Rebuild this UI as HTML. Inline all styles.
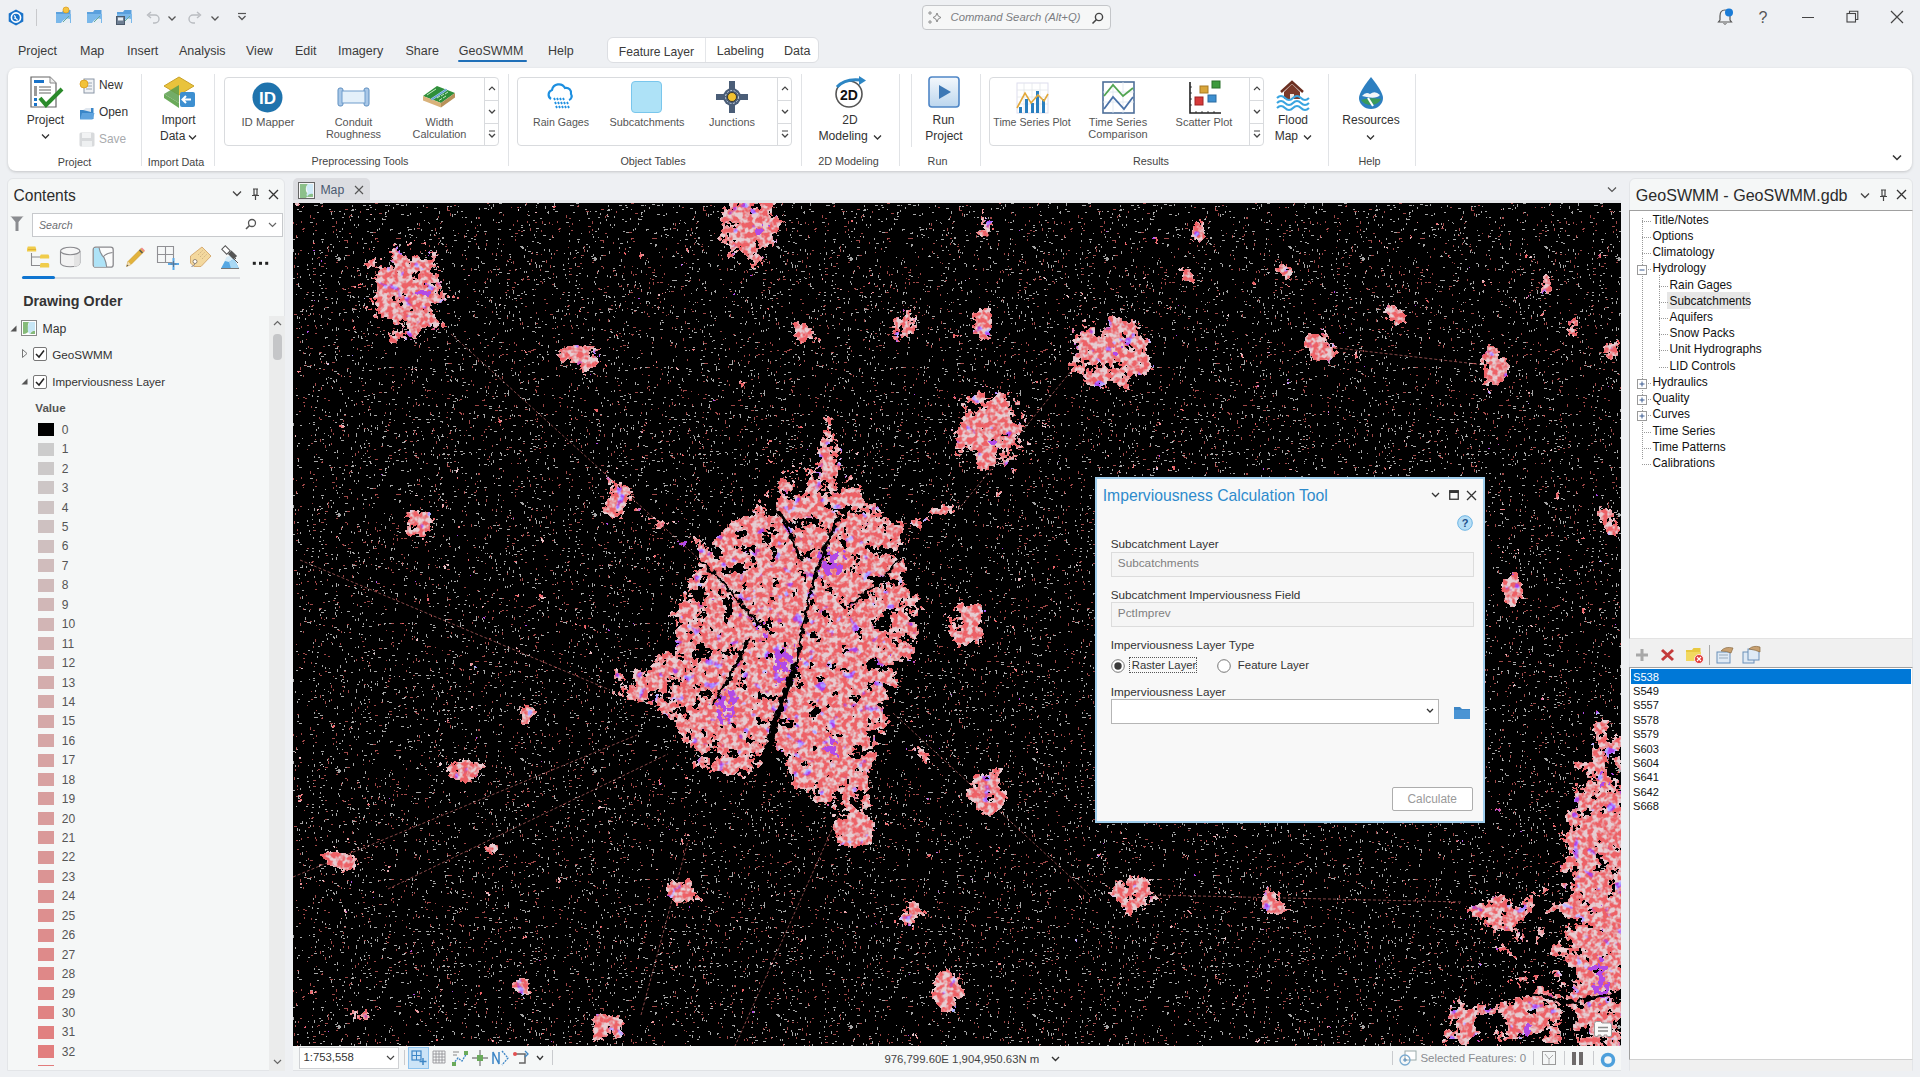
<!DOCTYPE html>
<html><head><meta charset="utf-8">
<style>
html,body{margin:0;padding:0;width:1920px;height:1077px;overflow:hidden;background:#eef0f3;font-family:"Liberation Sans", sans-serif;}
.t{position:absolute;white-space:nowrap;}
.r{position:absolute;box-sizing:border-box;}
svg.r{overflow:visible;}
</style></head><body>
<svg class="r" style="left:8px;top:9px;" width="16" height="17" viewBox="0 0 16 17"><path d="M8 0.5 L15.3 4.5 L15.3 12.5 L8 16.5 L0.7 12.5 L0.7 4.5 Z" fill="#1a73c9"/><circle cx="8" cy="8.5" r="4.6" fill="none" stroke="#fff" stroke-width="1.6"/><path d="M6 6.5 q2 1 1 3 q2 0 2.5 2" stroke="#fff" stroke-width="1.2" fill="none"/></svg><div class="r" style="left:36px;top:9px;width:1px;height:17px;background:#c8c9cc"></div><svg class="r" style="left:55px;top:8px;" width="17" height="16" viewBox="0 0 17 16"><path d="M1 4 h6 l1.5-2 h7 v12 h-14.5z" fill="#5aa0dd"/><path d="M1 6 h15 v9 h-15z" fill="#7ab8ea"/><path d="M6 15 q4-6 9-4 v4z" fill="#e6eef5"/><path d="M8 14 l6-6" stroke="#6a9" stroke-width="1"/></svg><svg class="r" style="left:86px;top:8px;" width="17" height="16" viewBox="0 0 17 16"><path d="M1 4 h6 l1.5-2 h7 v12 h-14.5z" fill="#5aa0dd"/><path d="M1 6 h15 v9 h-15z" fill="#7ab8ea"/><path d="M6 15 q4-6 9-4 v4z" fill="#e6eef5"/><path d="M8 14 l6-6" stroke="#6a9" stroke-width="1"/></svg><svg class="r" style="left:116px;top:8px;" width="17" height="16" viewBox="0 0 17 16"><path d="M1 4 h6 l1.5-2 h7 v12 h-14.5z" fill="#5aa0dd"/><path d="M1 6 h15 v9 h-15z" fill="#7ab8ea"/><path d="M6 15 q4-6 9-4 v4z" fill="#e6eef5"/><path d="M8 14 l6-6" stroke="#6a9" stroke-width="1"/></svg><svg class="r" style="left:62px;top:6px;" width="8" height="8" viewBox="0 0 8 8"><circle cx="4" cy="4" r="3" fill="#f5c542" stroke="#e0a020" stroke-width="0.8"/></svg><svg class="r" style="left:116px;top:16px;" width="9" height="9" viewBox="0 0 9 9"><rect x="0.5" y="0.5" width="8" height="8" fill="#6d7e92" stroke="#4b5a6b"/><rect x="2" y="1.5" width="5" height="3" fill="#e8eef4"/></svg><svg class="r" style="left:145px;top:11px;" width="15" height="14" viewBox="0 0 15 14"><path d="M4 4 h6 a4 4 0 0 1 0 8 h-2" fill="none" stroke="#b9bcc1" stroke-width="1.4"/><path d="M6 1 L2.5 4 L6 7" fill="none" stroke="#b9bcc1" stroke-width="1.4"/></svg><svg class="r" style="left:167px;top:15px;" width="10" height="7" viewBox="0 0 10 7"><path d="M1.5 1.5 L5 5 L8.5 1.5" fill="none" stroke="#555" stroke-width="1.3"/></svg><svg class="r" style="left:188px;top:11px;" width="15" height="14" viewBox="0 0 15 14"><path d="M11 4 h-6 a4 4 0 0 0 0 8 h2" fill="none" stroke="#b9bcc1" stroke-width="1.4"/><path d="M9 1 L12.5 4 L9 7" fill="none" stroke="#b9bcc1" stroke-width="1.4"/></svg><svg class="r" style="left:210px;top:15px;" width="10" height="7" viewBox="0 0 10 7"><path d="M1.5 1.5 L5 5 L8.5 1.5" fill="none" stroke="#555" stroke-width="1.3"/></svg><svg class="r" style="left:237px;top:12px;" width="10" height="11" viewBox="0 0 10 11"><path d="M1 1.5 h8" stroke="#555" stroke-width="1.2"/><path d="M1.5 4 L5 7.5 L8.5 4" fill="none" stroke="#555" stroke-width="1.3"/></svg><div class="r" style="left:922px;top:5px;width:189px;height:25px;background:#f6f7f7;border:1px solid #c4c6c9;border-radius:4px"></div><svg class="r" style="left:927px;top:10px;" width="16" height="15" viewBox="0 0 16 15"><path d="M10 3 q0.6 4 4 4.5 q-3.4 0.5 -4 4.5 q-0.6-4 -4-4.5 q3.4-0.5 4-4.5z" fill="none" stroke="#888" stroke-width="1"/><path d="M3 1 v4 M1 3 h4 M3 10 v4 M1 12 h4" stroke="#888" stroke-width="0.9"/></svg><div class="t" style="left:950.5px;top:12.36px;font-size:11.27px;line-height:11.27px;color:#7b7d82;font-style:italic;">Command Search (Alt+Q)</div><svg class="r" style="left:1091px;top:12px;" width="13" height="13" viewBox="0 0 13 13"><circle cx="8" cy="5" r="3.6" fill="none" stroke="#444" stroke-width="1.4"/><path d="M5.5 7.5 L1.5 11.5" stroke="#444" stroke-width="1.6"/></svg><svg class="r" style="left:1717px;top:8px;" width="16" height="18" viewBox="0 0 16 18"><path d="M8 2 q-5 0 -5 6 v4 l-1.5 2 h13 l-1.5-2 v-4 q0-6 -5-6z" fill="none" stroke="#555" stroke-width="1.2"/><path d="M6.5 15.5 q1.5 1.5 3 0" stroke="#555" fill="none"/><circle cx="12" cy="4.5" r="4" fill="#1a7bd6"/></svg><div class="t" style="left:1758.5px;top:10.46px;font-size:16px;line-height:16px;color:#555;">?</div><div class="r" style="left:1802px;top:17px;width:12px;height:1px;background:#444"></div><svg class="r" style="left:1846px;top:10px;" width="13" height="13" viewBox="0 0 13 13"><rect x="1" y="3.5" width="8.5" height="8.5" fill="none" stroke="#444" stroke-width="1.1"/><path d="M3.5 3.5 v-2.3 h8.3 v8.3 h-2.3" fill="none" stroke="#444" stroke-width="1.1"/></svg><svg class="r" style="left:1890px;top:10px;" width="14" height="14" viewBox="0 0 14 14"><path d="M1 1 L13 13 M13 1 L1 13" stroke="#444" stroke-width="1.2"/></svg><div class="t" style="left:18.0px;top:45.42px;font-size:12.5px;line-height:12.5px;color:#3b3b3b;">Project</div><div class="t" style="left:80.0px;top:45.42px;font-size:12.5px;line-height:12.5px;color:#3b3b3b;">Map</div><div class="t" style="left:127.0px;top:45.42px;font-size:12.5px;line-height:12.5px;color:#3b3b3b;">Insert</div><div class="t" style="left:179.0px;top:45.42px;font-size:12.5px;line-height:12.5px;color:#3b3b3b;">Analysis</div><div class="t" style="left:246.0px;top:45.42px;font-size:12.5px;line-height:12.5px;color:#3b3b3b;">View</div><div class="t" style="left:295.0px;top:45.42px;font-size:12.5px;line-height:12.5px;color:#3b3b3b;">Edit</div><div class="t" style="left:338.0px;top:45.42px;font-size:12.5px;line-height:12.5px;color:#3b3b3b;">Imagery</div><div class="t" style="left:405.5px;top:45.42px;font-size:12.5px;line-height:12.5px;color:#3b3b3b;">Share</div><div class="t" style="left:458.8px;top:45.42px;font-size:12.5px;line-height:12.5px;color:#3b3b3b;">GeoSWMM</div><div class="t" style="left:548.0px;top:45.42px;font-size:12.5px;line-height:12.5px;color:#3b3b3b;">Help</div><div class="r" style="left:458px;top:60px;width:69px;height:2px;background:#1f6fb8;border-radius:1px"></div><div class="r" style="left:607px;top:37px;width:212px;height:26px;background:#fff;border:1px solid #dcdee2;border-radius:6px"></div><div class="r" style="left:705px;top:38px;width:1px;height:24px;background:#e4e6e9"></div><div class="t" style="left:618.8px;top:45.76px;font-size:12.1px;line-height:12.1px;color:#3b3b3b;">Feature Layer</div><div class="t" style="left:716.7px;top:45.42px;font-size:12.5px;line-height:12.5px;color:#3b3b3b;">Labeling</div><div class="t" style="left:784.0px;top:45.42px;font-size:12.5px;line-height:12.5px;color:#3b3b3b;">Data</div><div class="r" style="left:8px;top:68px;width:1904px;height:103px;background:#fff;border-radius:8px;box-shadow:0 1px 3px rgba(0,0,0,0.18)"></div><div class="r" style="left:141px;top:74px;width:1px;height:92px;background:#e1e3e6"></div><div class="r" style="left:214px;top:74px;width:1px;height:92px;background:#e1e3e6"></div><div class="r" style="left:508px;top:74px;width:1px;height:92px;background:#e1e3e6"></div><div class="r" style="left:801px;top:74px;width:1px;height:92px;background:#e1e3e6"></div><div class="r" style="left:899px;top:74px;width:1px;height:92px;background:#e1e3e6"></div><div class="r" style="left:979.5px;top:74px;width:1px;height:92px;background:#e1e3e6"></div><div class="r" style="left:1328px;top:74px;width:1px;height:92px;background:#e1e3e6"></div><div class="r" style="left:1414.5px;top:74px;width:1px;height:92px;background:#e1e3e6"></div><div class="r" style="left:911px;top:74px;width:1px;height:73px;background:#e1e3e6"></div><svg class="r" style="left:30px;top:76px;" width="33" height="32" viewBox="0 0 33 32"><path d="M1 1 h19 l6 6 v24 h-25z" fill="#fff" stroke="#666" stroke-width="1.2"/><path d="M20 1 v6 h6" fill="#eee" stroke="#888"/><rect x="4" y="4" width="10" height="3" fill="#1a73c9"/><rect x="4" y="10" width="3" height="10" fill="#999"/><path d="M9 11 h12 M9 14 h12 M9 17 h12" stroke="#999" stroke-width="1.5"/><rect x="4" y="22" width="3" height="3" fill="#1a73c9"/><rect x="4" y="27" width="3" height="3" fill="#1a73c9"/><path d="M10 22 L16 29 L32 13" fill="none" stroke="#2a8a2a" stroke-width="4"/></svg><div class="t" style="left:-104.5px;width:300px;text-align:center;top:114.34px;font-size:12px;line-height:12px;color:#333;">Project</div><svg class="r" style="left:41px;top:133px;" width="9" height="7" viewBox="0 0 9 7"><path d="M1 1.5 L4.5 5 L8 1.5" fill="none" stroke="#333" stroke-width="1.3"/></svg><svg class="r" style="left:79px;top:78px;" width="16" height="16" viewBox="0 0 16 16"><rect x="5" y="1" width="10" height="14" fill="#f0f2f5" stroke="#8a96a6" stroke-width="1"/><path d="M7 5h6M7 8h6M7 11h6" stroke="#9aa6b4"/><circle cx="5" cy="6" r="4" fill="#f2c23a" stroke="#d99a1a" stroke-width="0.8"/></svg><div class="t" style="left:99.0px;top:79.63px;font-size:11.9px;line-height:11.9px;color:#333;">New</div><svg class="r" style="left:79px;top:107px;" width="16" height="13" viewBox="0 0 16 13"><path d="M1 3 h5 l1.5-2 h7 v11 h-13.5z" fill="#3a86c8"/><path d="M3 6 h12.5 l-2 6.5 h-12.5z" fill="#5fa3de"/><path d="M4 3 l3-2 h5 v4" fill="#dfe6ee"/></svg><div class="t" style="left:99.0px;top:106.63px;font-size:11.9px;line-height:11.9px;color:#333;">Open</div><svg class="r" style="left:79px;top:132px;" width="16" height="15" viewBox="0 0 16 15"><rect x="0.5" y="0.5" width="15" height="14" rx="1.5" fill="#d8dadc"/><rect x="3" y="1" width="9" height="5" fill="#f2f3f4"/><rect x="3" y="9" width="10" height="6" fill="#eef0f1"/></svg><div class="t" style="left:99.0px;top:133.53px;font-size:11.9px;line-height:11.9px;color:#a9abae;">Save</div><div class="t" style="left:-75.5px;width:300px;text-align:center;top:156.66px;font-size:10.8px;line-height:10.8px;color:#444;">Project</div><svg class="r" style="left:162px;top:76px;" width="34" height="33" viewBox="0 0 34 33"><path d="M17 1 L32 10 L17 19 L2 10z" fill="#e9c33c" stroke="#c9a22a" stroke-width="1"/><path d="M2 18 L17 27 L17 32 L2 22z" fill="#6aaa5a"/><path d="M2 18 L17 9 L17 27z" fill="#5a9d4c" opacity="0.85"/><rect x="18" y="16" width="15" height="15" rx="2" fill="#3d8fd0"/><path d="M29 23.5 h-8 M24 20 l-3.5 3.5 l3.5 3.5" stroke="#fff" stroke-width="2" fill="none"/></svg><div class="t" style="left:28.5px;width:300px;text-align:center;top:114.34px;font-size:12px;line-height:12px;color:#333;">Import</div><div class="t" style="left:160.0px;top:129.84px;font-size:12px;line-height:12px;color:#333;">Data</div><svg class="r" style="left:188px;top:134px;" width="9" height="7" viewBox="0 0 9 7"><path d="M1 1.5 L4.5 5 L8 1.5" fill="none" stroke="#333" stroke-width="1.3"/></svg><div class="t" style="left:26.0px;width:300px;text-align:center;top:156.66px;font-size:10.8px;line-height:10.8px;color:#444;">Import Data</div><div class="r" style="left:224px;top:77px;width:275px;height:69px;background:#fff;border:1px solid #d9dbde;border-radius:4px"></div><div class="r" style="left:484px;top:77px;width:15px;height:69px;border-left:1px solid #d9dbde"></div><div class="r" style="left:484px;top:100px;width:15px;height:1px;background:#d9dbde"></div><div class="r" style="left:484px;top:123px;width:15px;height:1px;background:#d9dbde"></div><svg class="r" style="left:488px;top:86px;" width="8" height="5" viewBox="0 0 8 5"><path d="M1 4 L4 1 L7 4" fill="none" stroke="#444" stroke-width="1.1"/></svg><svg class="r" style="left:488px;top:109px;" width="8" height="5" viewBox="0 0 8 5"><path d="M1 1 L4 4 L7 1" fill="none" stroke="#444" stroke-width="1.3"/></svg><svg class="r" style="left:488px;top:130px;" width="8" height="9" viewBox="0 0 8 9"><path d="M1 1 h6" stroke="#444" stroke-width="1"/><path d="M1 4 L4 7 L7 4" fill="none" stroke="#444" stroke-width="1.3"/></svg><svg class="r" style="left:252px;top:82px;" width="31" height="31" viewBox="0 0 31 31"><circle cx="15.5" cy="15.5" r="15" fill="#1f73ad"/><text x="15.5" y="21.5" text-anchor="middle" font-family="Liberation Sans" font-weight="bold" font-size="17" fill="#fff">ID</text></svg><div class="t" style="left:118.0px;width:300px;text-align:center;top:116.57px;font-size:11.38px;line-height:11.38px;color:#555;">ID Mapper</div><svg class="r" style="left:337px;top:87px;" width="33" height="20" viewBox="0 0 33 20"><rect x="1" y="1" width="5" height="18" rx="2" fill="#a9c8e8" stroke="#5f8fc0"/><rect x="27" y="1" width="5" height="18" rx="2" fill="#a9c8e8" stroke="#5f8fc0"/><rect x="5" y="4" width="23" height="12" fill="#e4f0fa" stroke="#6f9ccb"/></svg><div class="t" style="left:203.5px;width:300px;text-align:center;top:116.77px;font-size:10.9px;line-height:10.9px;color:#555;">Conduit</div><div class="t" style="left:203.5px;width:300px;text-align:center;top:129.47px;font-size:10.9px;line-height:10.9px;color:#555;">Roughness</div><svg class="r" style="left:422px;top:85px;" width="34" height="23" viewBox="0 0 34 23"><path d="M1 11 L15 1 L33 8 L19 18z" fill="#2f8f3a"/><path d="M1 11 L19 18 L19 22.5 L1 15.5z" fill="#d9b27a"/><path d="M19 18 L33 8 L33 12.5 L19 22.5z" fill="#b8915a"/><path d="M9.5 14.5 L24.5 4.5" stroke="#9cc8ee" stroke-width="2.2"/><path d="M9.5 14.5 L24.5 4.5" stroke="#3a78b8" stroke-width="0.7"/><path d="M5 10 l3-2 M8 8 l3-2 M11 6 l3-2 M15 13 l3-2 M19 11 l3-2 M23 9 l3-2 M17 15.5 l3-2 M21 13 l3-2" stroke="#d8f0d8" stroke-width="0.9"/></svg><div class="t" style="left:289.5px;width:300px;text-align:center;top:116.77px;font-size:10.9px;line-height:10.9px;color:#555;">Width</div><div class="t" style="left:289.5px;width:300px;text-align:center;top:129.47px;font-size:10.9px;line-height:10.9px;color:#555;">Calculation</div><div class="t" style="left:210.0px;width:300px;text-align:center;top:156.46px;font-size:10.8px;line-height:10.8px;color:#444;">Preprocessing Tools</div><div class="r" style="left:517px;top:77px;width:275px;height:69px;background:#fff;border:1px solid #d9dbde;border-radius:4px"></div><div class="r" style="left:777px;top:77px;width:15px;height:69px;border-left:1px solid #d9dbde"></div><div class="r" style="left:777px;top:100px;width:15px;height:1px;background:#d9dbde"></div><div class="r" style="left:777px;top:123px;width:15px;height:1px;background:#d9dbde"></div><svg class="r" style="left:781px;top:86px;" width="8" height="5" viewBox="0 0 8 5"><path d="M1 4 L4 1 L7 4" fill="none" stroke="#444" stroke-width="1.1"/></svg><svg class="r" style="left:781px;top:109px;" width="8" height="5" viewBox="0 0 8 5"><path d="M1 1 L4 4 L7 1" fill="none" stroke="#444" stroke-width="1.3"/></svg><svg class="r" style="left:781px;top:130px;" width="8" height="9" viewBox="0 0 8 9"><path d="M1 1 h6" stroke="#444" stroke-width="1"/><path d="M1 4 L4 7 L7 4" fill="none" stroke="#444" stroke-width="1.3"/></svg><svg class="r" style="left:543px;top:84px;" width="35" height="27" viewBox="0 0 35 27"><path d="M8 15 a5 5 0 0 1 1-9 a7 7 0 0 1 13-2 a5 5 0 0 1 6 6 a4 4 0 0 1 -2 6" fill="none" stroke="#1d8fe0" stroke-width="2.2"/><g fill="#1d8fe0"><path d="M11 14 l1 2 M14 14 l1 2 M17 14 l1 2 M20 14 l1 2 M12 18 l1 2 M15 18 l1 2 M18 18 l1 2 M21 18 l1 2 M24 18 l1 2 M13 22 l1 2 M16 22 l1 2 M19 22 l1 2 M22 22 l1 2 M25 22 l1 2" stroke="#1d8fe0" stroke-width="1.8"/></g></svg><div class="t" style="left:411.0px;width:300px;text-align:center;top:117.23px;font-size:10.6px;line-height:10.6px;color:#555;">Rain Gages</div><div class="r" style="left:631px;top:81px;width:31px;height:32px;background:#aee2f7;border:1px solid #79c6ec;border-radius:4px"></div><div class="t" style="left:497.0px;width:300px;text-align:center;top:116.97px;font-size:10.9px;line-height:10.9px;color:#555;">Subcatchments</div><svg class="r" style="left:716px;top:81px;" width="32" height="32" viewBox="0 0 32 32"><path d="M13 0 h6 v10 h-6z M13 22 h6 v10 h-6z M0 13 h10 v6 h-10z M22 13 h10 v6 h-10z" fill="#4a5d77"/><circle cx="16" cy="16" r="9" fill="#4a5d77"/><circle cx="16" cy="16" r="6.5" fill="none" stroke="#c9d3df" stroke-width="1" stroke-dasharray="2 1.5"/><circle cx="16" cy="16" r="4.5" fill="#f2c230" stroke="#222" stroke-width="0.8"/></svg><div class="t" style="left:582.0px;width:300px;text-align:center;top:116.97px;font-size:10.9px;line-height:10.9px;color:#555;">Junctions</div><div class="t" style="left:503.0px;width:300px;text-align:center;top:156.46px;font-size:10.8px;line-height:10.8px;color:#444;">Object Tables</div><svg class="r" style="left:832px;top:76px;" width="35" height="32" viewBox="0 0 35 32"><circle cx="17" cy="18" r="13" fill="#fff" stroke="#555" stroke-width="1.6"/><text x="17" y="23.5" text-anchor="middle" font-family="Liberation Sans" font-weight="bold" font-size="14" fill="#111">2D</text><path d="M5 11 q8-9 24-7" fill="none" stroke="#2d86c4" stroke-width="3"/><path d="M27 0 L34 4.5 L27 9z" fill="#2d86c4"/></svg><div class="t" style="left:700.0px;width:300px;text-align:center;top:114.04px;font-size:12px;line-height:12px;color:#333;">2D</div><div class="t" style="left:818.4px;top:130.27px;font-size:12.2px;line-height:12.2px;color:#333;">Modeling</div><svg class="r" style="left:873px;top:134px;" width="9" height="7" viewBox="0 0 9 7"><path d="M1 1.5 L4.5 5 L8 1.5" fill="none" stroke="#333" stroke-width="1.3"/></svg><div class="t" style="left:698.5px;width:300px;text-align:center;top:156.46px;font-size:10.8px;line-height:10.8px;color:#444;">2D Modeling</div><svg class="r" style="left:928px;top:76px;" width="32" height="32" viewBox="0 0 32 32"><defs><linearGradient id="rg" x1="0" y1="0" x2="0" y2="1"><stop offset="0" stop-color="#f4f8fc"/><stop offset="1" stop-color="#bcd6ee"/></linearGradient></defs><rect x="1" y="1" width="30" height="30" rx="3" fill="url(#rg)" stroke="#4f86c6" stroke-width="1.6"/><path d="M11 9 L23 16 L11 23z" fill="#3d78b5"/></svg><div class="t" style="left:793.5px;width:300px;text-align:center;top:114.34px;font-size:12px;line-height:12px;color:#333;">Run</div><div class="t" style="left:794.0px;width:300px;text-align:center;top:130.44px;font-size:12px;line-height:12px;color:#333;">Project</div><div class="t" style="left:787.5px;width:300px;text-align:center;top:156.46px;font-size:10.8px;line-height:10.8px;color:#444;">Run</div><div class="r" style="left:989px;top:77px;width:275px;height:69px;background:#fff;border:1px solid #d9dbde;border-radius:4px"></div><div class="r" style="left:1249px;top:77px;width:15px;height:69px;border-left:1px solid #d9dbde"></div><div class="r" style="left:1249px;top:100px;width:15px;height:1px;background:#d9dbde"></div><div class="r" style="left:1249px;top:123px;width:15px;height:1px;background:#d9dbde"></div><svg class="r" style="left:1253px;top:86px;" width="8" height="5" viewBox="0 0 8 5"><path d="M1 4 L4 1 L7 4" fill="none" stroke="#444" stroke-width="1.1"/></svg><svg class="r" style="left:1253px;top:109px;" width="8" height="5" viewBox="0 0 8 5"><path d="M1 1 L4 4 L7 1" fill="none" stroke="#444" stroke-width="1.3"/></svg><svg class="r" style="left:1253px;top:130px;" width="8" height="9" viewBox="0 0 8 9"><path d="M1 1 h6" stroke="#444" stroke-width="1"/><path d="M1 4 L4 7 L7 4" fill="none" stroke="#444" stroke-width="1.3"/></svg><svg class="r" style="left:1016px;top:82px;" width="33" height="32" viewBox="0 0 33 32"><rect x="1" y="1" width="31" height="30" fill="#fff" stroke="#dde" stroke-width="1"/><path d="M1 8h31M1 15h31M1 22h31M8 1v30M16 1v30M24 1v30" stroke="#e2e6ea" stroke-width="0.8"/><path d="M3 31 v-6 h3 v6z M9 31 v-14 h3 v14z M15 31 v-10 h3 v10z M20 31 v-22 h3 v22z M26 31 v-14 h3 v14z" fill="#2a7fbf"/><path d="M1 26 L9 11 L15 21 L22 13 L28 19 L32 12" fill="none" stroke="#e2a83a" stroke-width="1.6"/></svg><div class="t" style="left:882.0px;width:300px;text-align:center;top:117.23px;font-size:10.6px;line-height:10.6px;color:#555;">Time Series Plot</div><svg class="r" style="left:1102px;top:81px;" width="33" height="33" viewBox="0 0 33 33"><rect x="1" y="1" width="31" height="31" fill="#fff" stroke="#4e6f99" stroke-width="1.6"/><path d="M1 11h31M1 21h31M11 1v31M21 1v31" stroke="#dde6f0" stroke-width="0.8"/><path d="M2 15 L11 4 L21 15 L31 7" fill="none" stroke="#52a552" stroke-width="1.8"/><path d="M2 28 L11 16 L22 28 L31 16" fill="none" stroke="#4a72a8" stroke-width="1.8"/></svg><div class="t" style="left:968.0px;width:300px;text-align:center;top:116.99px;font-size:11px;line-height:11px;color:#555;">Time Series</div><div class="t" style="left:968.0px;width:300px;text-align:center;top:129.39px;font-size:11px;line-height:11px;color:#555;">Comparison</div><svg class="r" style="left:1188px;top:81px;" width="33" height="33" viewBox="0 0 33 33"><path d="M2 1 v31 h31" fill="none" stroke="#222" stroke-width="1.6"/><path d="M2 6h2M2 12h2M2 18h2M2 24h2M8 32v-2M14 32v-2M20 32v-2M26 32v-2" stroke="#222" stroke-width="0.8"/><rect x="12" y="5" width="8" height="7" fill="#d8a53a" stroke="#a87a22"/><rect x="24" y="0" width="8" height="7" fill="#3d9a3d" stroke="#2a702a"/><rect x="7" y="16" width="8" height="8" fill="#d63a3a" stroke="#a02222"/><rect x="20" y="14" width="8" height="7" fill="#3d8fd0" stroke="#2a6aa0"/></svg><div class="t" style="left:1054.0px;width:300px;text-align:center;top:116.89px;font-size:11px;line-height:11px;color:#555;">Scatter Plot</div><svg class="r" style="left:1276px;top:80px;" width="33" height="29" viewBox="0 0 33 29"><path d="M8 12 L16 4 L24 12 v7 h-16z" fill="#7a3a2a"/><path d="M5 12 L16 2 L27 12" fill="none" stroke="#6a2e20" stroke-width="2.5"/><rect x="14" y="14" width="4" height="5" fill="#f0e8e0"/><path d="M1 18 q4-4 8 0 t8 0 t8 0 t8 0 M1 23 q4-4 8 0 t8 0 t8 0 t8 0 M1 28 q4-4 8 0 t8 0 t8 0 t8 0" fill="none" stroke="#3aa5e0" stroke-width="2"/></svg><div class="t" style="left:1143.0px;width:300px;text-align:center;top:114.34px;font-size:12px;line-height:12px;color:#333;">Flood</div><div class="t" style="left:1274.7px;top:130.44px;font-size:12px;line-height:12px;color:#333;">Map</div><svg class="r" style="left:1303px;top:134px;" width="9" height="7" viewBox="0 0 9 7"><path d="M1 1.5 L4.5 5 L8 1.5" fill="none" stroke="#333" stroke-width="1.3"/></svg><div class="t" style="left:1001.0px;width:300px;text-align:center;top:156.46px;font-size:10.8px;line-height:10.8px;color:#444;">Results</div><svg class="r" style="left:1358px;top:76px;" width="26" height="33" viewBox="0 0 26 33"><path d="M13 1 q-12 15 -12 21 a12 11 0 0 0 24 0 q0-6 -12-21z" fill="#2d7fc0"/><path d="M4 20 q4-5 8-2 q5-4 10 1 q-4 5 -18 1z" fill="#f4f6f8"/><path d="M3 24 q8-3 20-1 q-2 5 -9 6 q-8 0 -11-5z" fill="#3a9a5a"/><path d="M10 22 l5 8" stroke="#fff" stroke-width="2"/></svg><div class="t" style="left:1221.0px;width:300px;text-align:center;top:114.34px;font-size:12px;line-height:12px;color:#333;">Resources</div><svg class="r" style="left:1366px;top:134px;" width="9" height="7" viewBox="0 0 9 7"><path d="M1 1.5 L4.5 5 L8 1.5" fill="none" stroke="#333" stroke-width="1.3"/></svg><div class="t" style="left:1219.5px;width:300px;text-align:center;top:156.46px;font-size:10.8px;line-height:10.8px;color:#444;">Help</div><svg class="r" style="left:1892px;top:154px;" width="10" height="7" viewBox="0 0 10 7"><path d="M1 1.5 L5 5.5 L9 1.5" fill="none" stroke="#333" stroke-width="1.5"/></svg><div class="r" style="left:7px;top:178px;width:278px;height:893px;background:#f5f7f7;border:1px solid #e3e5e8;border-radius:6px 6px 0 0"></div><div class="t" style="left:13.5px;top:187.69px;font-size:15.6px;line-height:15.6px;color:#2b2b2b;">Contents</div><svg class="r" style="left:232px;top:190px;" width="10" height="7" viewBox="0 0 10 7"><path d="M1 1.5 L5 5.5 L9 1.5" fill="none" stroke="#444" stroke-width="1.3"/></svg><svg class="r" style="left:250px;top:188px;" width="10" height="13" viewBox="0 0 10 13"><path d="M3 1 h5 M4 1 v6 h3 v-6 M2 7.5 h7 M5.5 8 v4" stroke="#444" stroke-width="1.2" fill="none"/></svg><svg class="r" style="left:268px;top:189px;" width="11" height="11" viewBox="0 0 11 11"><path d="M1 1 L10 10 M10 1 L1 10" stroke="#333" stroke-width="1.3"/></svg><svg class="r" style="left:10px;top:215px;" width="14" height="17" viewBox="0 0 14 17"><path d="M0.5 1 h13 l-5 6 v9 h-3 v-9z" fill="#8a8c90"/><path d="M1 1.5 h12" stroke="#ccc" stroke-width="0.8"/></svg><div class="r" style="left:32px;top:213px;width:251px;height:24px;background:#fff;border:1px solid #c7c9cc"></div><div class="t" style="left:39.0px;top:220.19px;font-size:10.64px;line-height:10.64px;color:#6c6e72;font-style:italic;">Search</div><svg class="r" style="left:244px;top:218px;" width="13" height="13" viewBox="0 0 13 13"><circle cx="8" cy="5" r="3.5" fill="none" stroke="#555" stroke-width="1.3"/><path d="M5.5 7.5 L2 11" stroke="#555" stroke-width="1.6"/></svg><svg class="r" style="left:268px;top:222px;" width="9" height="6" viewBox="0 0 9 6"><path d="M1 1 L4.5 4.5 L8 1" fill="none" stroke="#666" stroke-width="1.2"/></svg><svg class="r" style="left:26px;top:245px;" width="25" height="24" viewBox="0 0 25 24"><path d="M5.5 8 v12.5 h9 M5.5 12 h9" stroke="#8a8a8e" stroke-width="1.1" fill="none"/><path d="M1.8 1.5 h7.6 l0.8 2.5 v2.5 h-9.2 v-2.5z" fill="#f0cc4a"/><path d="M2 4.5 h8" stroke="#d9a832" stroke-width="0.8"/><path d="M14.8 9.5 h7.6 l0.8 1.5 v2.5 h-9.2 v-2.5z" fill="#f0cc4a"/><path d="M14.8 18 h7.6 l0.8 1.5 v3 h-9.2 v-3z" fill="#f0cc4a"/></svg><svg class="r" style="left:59px;top:246px;" width="23" height="22" viewBox="0 0 23 22"><path d="M1.5 5 v12 a9.7 3.8 0 0 0 19.4 0 v-12" fill="#f2f2f2" stroke="#8a8a8e" stroke-width="1.1"/><path d="M15 8.3 v12.5 a9.7 3.8 0 0 0 5.9-3.8 v-12z" fill="#e3e3e3"/><ellipse cx="11.2" cy="5" rx="9.7" ry="3.7" fill="#f6f6f6" stroke="#8a8a8e" stroke-width="1.1"/></svg><svg class="r" style="left:92px;top:246px;" width="23" height="23" viewBox="0 0 23 23"><rect x="1.2" y="1.2" width="20" height="20" rx="2.5" fill="#fbfbfb" stroke="#8a8a8e" stroke-width="1.3"/><path d="M2 2 h5.5 q1 6 5 9.5 q2 4 2.5 9.3 h-13z" fill="#aee3f7"/><path d="M7 1.5 q1 6.5 5 10 q2 4 2.7 9.5 M11.5 10.5 q3-3.5 9-4" fill="none" stroke="#8a8a8e" stroke-width="1.1"/></svg><svg class="r" style="left:124px;top:246px;" width="22" height="22" viewBox="0 0 22 22"><path d="M2.5 20.5 L4 15.5 L17 2.5 L20 5.5 L7 18.5z" fill="#e2b33c" stroke="#c9952a" stroke-width="0.6"/><path d="M2.5 20.5 L4 15.5 L7 18.5z" fill="#f0dcb0"/><path d="M2.5 20.5 L3.2 18.5 L4.5 19.8z" fill="#555"/><path d="M15.5 4 L18.5 7" stroke="#555" stroke-width="1.5"/><path d="M17.3 2.2 L20.3 5.2" stroke="#f08a8a" stroke-width="1.8"/></svg><svg class="r" style="left:156px;top:245px;" width="25" height="25" viewBox="0 0 25 25"><path d="M1.5 1.5 h16 v16 h-16z M9.5 1.5 v16 M1.5 9.5 h16" fill="none" stroke="#909094" stroke-width="1.1"/><path d="M17.5 13 v12 M12 19 h11" stroke="#5aaae8" stroke-width="2"/><path d="M17.5 16 v6 M14.5 19 h6" stroke="#5a6a80" stroke-width="0.8"/></svg><svg class="r" style="left:189px;top:246px;" width="23" height="23" viewBox="0 0 23 23"><path d="M13 1 L22 10 L12 20.5 L5 20.5 L1.5 17 L1.5 10z" fill="#f3d89e" stroke="#d2a66a" stroke-width="0.9"/><circle cx="6" cy="15.5" r="2" fill="#fff" stroke="#8a7a6a" stroke-width="0.9"/><path d="M6 17.5 q-1 3 -3.5 3" fill="none" stroke="#7a7a8a" stroke-width="0.9"/><path d="M9 9 l5-5 M11 11 l5-5 M13 13 l5-5" stroke="#c8aa7a" stroke-width="0.8" stroke-dasharray="1.5 1"/></svg><svg class="r" style="left:220px;top:245px;" width="22" height="24" viewBox="0 0 22 24"><path d="M1 23.5 L6.5 12 L12 10 L19 23.5z" fill="#d6ecf8"/><path d="M1 23.5 L5 16 L9 17 L14 14 L19 23.5z" fill="#56a8e4"/><path d="M9 17 L14 14 L17 20 L19 23.5 L11 23.5z" fill="#a8d8f4"/><path d="M1 23.5 h18" stroke="#777" stroke-width="1"/><rect x="3.5" y="1.5" width="5" height="7" fill="#fff" stroke="#555" stroke-width="1" transform="rotate(-45 6 5)"/><rect x="10" y="6" width="5" height="8" fill="#555" transform="rotate(-45 12.5 10)"/><path d="M15 15 l3 3 M16 13 l-2 2" stroke="#555" stroke-width="1"/></svg><svg class="r" style="left:252px;top:261px;" width="17" height="5" viewBox="0 0 17 5"><rect x="0.8" y="0.8" width="3" height="3" fill="#222"/><rect x="7" y="0.8" width="3" height="3" fill="#222"/><rect x="13.2" y="0.8" width="3" height="3" fill="#222"/></svg><div class="r" style="left:22px;top:277px;width:218px;height:2px;background:#dcdde0"></div><div class="r" style="left:22px;top:275.5px;width:33px;height:3.5px;background:#0f75d0;border-radius:2px"></div><div class="t" style="left:23.2px;top:294.40px;font-size:14.3px;line-height:14.3px;color:#333;font-weight:bold;">Drawing Order</div><svg class="r" style="left:10px;top:325px;" width="7" height="7" viewBox="0 0 7 7"><path d="M6.5 0.5 v6 h-6z" fill="#555"/></svg><svg class="r" style="left:21px;top:320px;" width="16" height="16" viewBox="0 0 16 16"><rect x="0.5" y="0.5" width="15" height="15" fill="#fff" stroke="#888"/><path d="M2 2 h6 q-3 5 1 7 q-2 5 -7 5z" fill="#86bb7a"/><path d="M9 14 q2-4 5-3 v3z" fill="#86bb7a"/><path d="M8 2 h6 v9 q-3-1 -5 3 q-4-2 -1-12z" fill="#c7e6f5"/></svg><div class="t" style="left:42.5px;top:323.34px;font-size:12.24px;line-height:12.24px;color:#333;">Map</div><svg class="r" style="left:22px;top:349px;" width="6" height="9" viewBox="0 0 6 9"><path d="M0.5 0.5 L5 4.5 L0.5 8.5z" fill="none" stroke="#777" stroke-width="1"/></svg><svg class="r" style="left:33px;top:347px;" width="14" height="14" viewBox="0 0 14 14"><rect x="0.5" y="0.5" width="13" height="13" rx="1.5" fill="#fff" stroke="#777"/><path d="M3 7 L6 10 L11 3.5" fill="none" stroke="#222" stroke-width="1.5"/></svg><div class="t" style="left:52.2px;top:348.60px;font-size:11.69px;line-height:11.69px;color:#333;">GeoSWMM</div><svg class="r" style="left:21px;top:378px;" width="7" height="7" viewBox="0 0 7 7"><path d="M6.5 0.5 v6 h-6z" fill="#555"/></svg><svg class="r" style="left:33px;top:375px;" width="14" height="14" viewBox="0 0 14 14"><rect x="0.5" y="0.5" width="13" height="13" rx="1.5" fill="#fff" stroke="#777"/><path d="M3 7 L6 10 L11 3.5" fill="none" stroke="#222" stroke-width="1.5"/></svg><div class="t" style="left:52.2px;top:377.21px;font-size:11.56px;line-height:11.56px;color:#333;">Imperviousness Layer</div><div class="t" style="left:35.3px;top:402.35px;font-size:11.64px;line-height:11.64px;color:#555;font-weight:bold;">Value</div><div class="r" style="left:38px;top:423px;width:16px;height:13px;background:#000"></div><div class="t" style="left:61.8px;top:423.80px;font-size:12.05px;line-height:12.05px;color:#555;">0</div><div class="r" style="left:38px;top:443px;width:16px;height:13px;background:rgb(204,204,204)"></div><div class="t" style="left:61.8px;top:443.24px;font-size:12.05px;line-height:12.05px;color:#555;">1</div><div class="r" style="left:38px;top:462px;width:16px;height:13px;background:rgb(204,201,201)"></div><div class="t" style="left:61.8px;top:462.68px;font-size:12.05px;line-height:12.05px;color:#555;">2</div><div class="r" style="left:38px;top:481px;width:16px;height:13px;background:rgb(205,198,198)"></div><div class="t" style="left:61.8px;top:482.12px;font-size:12.05px;line-height:12.05px;color:#555;">3</div><div class="r" style="left:38px;top:501px;width:16px;height:13px;background:rgb(206,196,196)"></div><div class="t" style="left:61.8px;top:501.56px;font-size:12.05px;line-height:12.05px;color:#555;">4</div><div class="r" style="left:38px;top:520px;width:16px;height:13px;background:rgb(206,193,193)"></div><div class="t" style="left:61.8px;top:521.00px;font-size:12.05px;line-height:12.05px;color:#555;">5</div><div class="r" style="left:38px;top:540px;width:16px;height:13px;background:rgb(207,191,191)"></div><div class="t" style="left:61.8px;top:540.44px;font-size:12.05px;line-height:12.05px;color:#555;">6</div><div class="r" style="left:38px;top:559px;width:16px;height:13px;background:rgb(208,188,188)"></div><div class="t" style="left:61.8px;top:559.88px;font-size:12.05px;line-height:12.05px;color:#555;">7</div><div class="r" style="left:38px;top:579px;width:16px;height:13px;background:rgb(208,186,186)"></div><div class="t" style="left:61.8px;top:579.32px;font-size:12.05px;line-height:12.05px;color:#555;">8</div><div class="r" style="left:38px;top:598px;width:16px;height:13px;background:rgb(209,183,183)"></div><div class="t" style="left:61.8px;top:598.76px;font-size:12.05px;line-height:12.05px;color:#555;">9</div><div class="r" style="left:38px;top:618px;width:16px;height:13px;background:rgb(210,181,181)"></div><div class="t" style="left:61.8px;top:618.20px;font-size:12.05px;line-height:12.05px;color:#555;">10</div><div class="r" style="left:38px;top:637px;width:16px;height:13px;background:rgb(211,178,178)"></div><div class="t" style="left:61.8px;top:637.64px;font-size:12.05px;line-height:12.05px;color:#555;">11</div><div class="r" style="left:38px;top:656px;width:16px;height:13px;background:rgb(211,176,176)"></div><div class="t" style="left:61.8px;top:657.08px;font-size:12.05px;line-height:12.05px;color:#555;">12</div><div class="r" style="left:38px;top:676px;width:16px;height:13px;background:rgb(212,173,173)"></div><div class="t" style="left:61.8px;top:676.52px;font-size:12.05px;line-height:12.05px;color:#555;">13</div><div class="r" style="left:38px;top:695px;width:16px;height:13px;background:rgb(213,171,171)"></div><div class="t" style="left:61.8px;top:695.96px;font-size:12.05px;line-height:12.05px;color:#555;">14</div><div class="r" style="left:38px;top:715px;width:16px;height:13px;background:rgb(213,168,168)"></div><div class="t" style="left:61.8px;top:715.40px;font-size:12.05px;line-height:12.05px;color:#555;">15</div><div class="r" style="left:38px;top:734px;width:16px;height:13px;background:rgb(214,166,166)"></div><div class="t" style="left:61.8px;top:734.84px;font-size:12.05px;line-height:12.05px;color:#555;">16</div><div class="r" style="left:38px;top:754px;width:16px;height:13px;background:rgb(215,163,163)"></div><div class="t" style="left:61.8px;top:754.28px;font-size:12.05px;line-height:12.05px;color:#555;">17</div><div class="r" style="left:38px;top:773px;width:16px;height:13px;background:rgb(216,161,161)"></div><div class="t" style="left:61.8px;top:773.72px;font-size:12.05px;line-height:12.05px;color:#555;">18</div><div class="r" style="left:38px;top:792px;width:16px;height:13px;background:rgb(216,158,158)"></div><div class="t" style="left:61.8px;top:793.16px;font-size:12.05px;line-height:12.05px;color:#555;">19</div><div class="r" style="left:38px;top:812px;width:16px;height:13px;background:rgb(217,156,156)"></div><div class="t" style="left:61.8px;top:812.60px;font-size:12.05px;line-height:12.05px;color:#555;">20</div><div class="r" style="left:38px;top:831px;width:16px;height:13px;background:rgb(218,153,153)"></div><div class="t" style="left:61.8px;top:832.04px;font-size:12.05px;line-height:12.05px;color:#555;">21</div><div class="r" style="left:38px;top:851px;width:16px;height:13px;background:rgb(218,151,151)"></div><div class="t" style="left:61.8px;top:851.48px;font-size:12.05px;line-height:12.05px;color:#555;">22</div><div class="r" style="left:38px;top:870px;width:16px;height:13px;background:rgb(219,148,148)"></div><div class="t" style="left:61.8px;top:870.92px;font-size:12.05px;line-height:12.05px;color:#555;">23</div><div class="r" style="left:38px;top:890px;width:16px;height:13px;background:rgb(220,146,146)"></div><div class="t" style="left:61.8px;top:890.36px;font-size:12.05px;line-height:12.05px;color:#555;">24</div><div class="r" style="left:38px;top:909px;width:16px;height:13px;background:rgb(221,143,143)"></div><div class="t" style="left:61.8px;top:909.80px;font-size:12.05px;line-height:12.05px;color:#555;">25</div><div class="r" style="left:38px;top:929px;width:16px;height:13px;background:rgb(221,141,141)"></div><div class="t" style="left:61.8px;top:929.24px;font-size:12.05px;line-height:12.05px;color:#555;">26</div><div class="r" style="left:38px;top:948px;width:16px;height:13px;background:rgb(222,138,138)"></div><div class="t" style="left:61.8px;top:948.68px;font-size:12.05px;line-height:12.05px;color:#555;">27</div><div class="r" style="left:38px;top:967px;width:16px;height:13px;background:rgb(223,136,136)"></div><div class="t" style="left:61.8px;top:968.12px;font-size:12.05px;line-height:12.05px;color:#555;">28</div><div class="r" style="left:38px;top:987px;width:16px;height:13px;background:rgb(223,133,133)"></div><div class="t" style="left:61.8px;top:987.56px;font-size:12.05px;line-height:12.05px;color:#555;">29</div><div class="r" style="left:38px;top:1006px;width:16px;height:13px;background:rgb(224,131,131)"></div><div class="t" style="left:61.8px;top:1007.00px;font-size:12.05px;line-height:12.05px;color:#555;">30</div><div class="r" style="left:38px;top:1026px;width:16px;height:13px;background:rgb(225,128,128)"></div><div class="t" style="left:61.8px;top:1026.44px;font-size:12.05px;line-height:12.05px;color:#555;">31</div><div class="r" style="left:38px;top:1045px;width:16px;height:13px;background:rgb(226,126,126)"></div><div class="t" style="left:61.8px;top:1045.88px;font-size:12.05px;line-height:12.05px;color:#555;">32</div><div class="r" style="left:38px;top:1065px;width:16px;height:1px;background:rgb(226,123,123)"></div><div class="r" style="left:269px;top:316px;width:16px;height:755px;background:#ebecec"></div><svg class="r" style="left:273px;top:320px;" width="9" height="6" viewBox="0 0 9 6"><path d="M1 5 L4.5 1.5 L8 5" fill="none" stroke="#666" stroke-width="1.2"/></svg><div class="r" style="left:273px;top:334px;width:9px;height:26px;background:#c5c6c8;border-radius:4px"></div><svg class="r" style="left:273px;top:1059px;" width="9" height="6" viewBox="0 0 9 6"><path d="M1 1 L4.5 4.5 L8 1" fill="none" stroke="#666" stroke-width="1.2"/></svg><div class="r" style="left:293px;top:178px;width:77px;height:23px;background:#dcdde1;border-radius:5px 5px 0 0"></div><svg class="r" style="left:298px;top:182px;" width="17" height="17" viewBox="0 0 17 17"><rect x="0.5" y="0.5" width="16" height="16" fill="#f6f6f6" stroke="#666"/><path d="M2 2 h8 q-4 4 -1 9 q2 2 -1 5 h-6z" fill="#8cc08a"/><path d="M10 2 h5 v13 h-5 q-3-2 0-5 q-3-5 0-8z" fill="#cfeaf7"/><path d="M9 15 q2-4 6-3 v3z" fill="#8cc08a"/></svg><div class="t" style="left:320.4px;top:184.24px;font-size:12.24px;line-height:12.24px;color:#4a5a70;">Map</div><svg class="r" style="left:354px;top:185px;" width="10" height="10" viewBox="0 0 10 10"><path d="M1 1 L9 9 M9 1 L1 9" stroke="#555" stroke-width="1.1"/></svg><div class="r" style="left:293px;top:200px;width:1328px;height:3px;background:#e4e5e8"></div><svg class="r" style="left:1607px;top:186px;" width="10" height="7" viewBox="0 0 10 7"><path d="M1 1.5 L5 5.5 L9 1.5" fill="none" stroke="#555" stroke-width="1.2"/></svg><svg class="r" style="left:293px;top:203px" width="1328" height="843" viewBox="0 0 1328 843">
<defs>
<pattern id="spk" width="256" height="256" patternUnits="userSpaceOnUse"><path d="M52 44.5h3M172 52.5h1M176 135.5h1M148 40.5h2M232 186.5h2M136 36.5h3M134 219.5h3M78 81.5h2M239 128.5h3M54 152.5h3M64 65.5h2M159 204.5h2M117 34.5h1M242 124.5h2M49 220.5h2M27 50.5h1M161 133.5h2M135 202.5h2M178 35.5h2M26 47.5h2M76 18.5h2M121 83.5h2M55 195.5h1M114 12.5h2M35 142.5h2M169 14.5h1M135 19.5h1M160 223.5h3M97 130.5h1M169 160.5h1M158 209.5h2M65 98.5h2M89 154.5h2M164 238.5h2M171 47.5h2M218 228.5h2M132 126.5h2M139 171.5h2M199 214.5h3M42 219.5h2M78 122.5h2M111 238.5h2M159 192.5h2M137 165.5h2M172 14.5h2M141 5.5h3M43 127.5h1M115 194.5h2M147 224.5h1M206 139.5h3M20 221.5h2M92 223.5h2M206 0.5h3M185 255.5h2M67 147.5h2M139 212.5h2M74 196.5h2M250 76.5h2M122 196.5h2M41 168.5h3M147 116.5h1M176 153.5h2M154 101.5h2M25 254.5h2M186 67.5h1M246 151.5h2M203 187.5h1M195 190.5h1M167 113.5h1M208 143.5h1M37 41.5h2M140 166.5h2M232 220.5h1M110 220.5h2M232 204.5h2M242 34.5h1M216 26.5h2M46 110.5h2M41 139.5h2M181 36.5h2M185 45.5h2M165 161.5h2M146 39.5h1M96 164.5h3M224 81.5h2M145 129.5h3M200 66.5h3M47 216.5h3M92 109.5h2M225 236.5h2M214 82.5h2M230 178.5h1M191 120.5h2M9 131.5h2M122 214.5h3M149 219.5h1M213 95.5h1M191 129.5h1M123 53.5h3M237 245.5h2M242 129.5h1M223 204.5h2M151 156.5h2M187 185.5h2M58 13.5h2M60 134.5h2M163 177.5h1M153 80.5h2M245 210.5h2M162 37.5h2M165 115.5h2M140 64.5h2M225 212.5h2M204 66.5h2M160 97.5h2M234 123.5h2M68 135.5h2M205 26.5h3M143 60.5h2M242 233.5h2M153 172.5h3M213 157.5h1M116 26.5h3M56 97.5h1M244 192.5h2M175 181.5h2M152 147.5h2M140 147.5h1M51 211.5h2M70 2.5h3M243 244.5h2M146 30.5h1M19 89.5h2M171 145.5h2M252 68.5h3M218 167.5h1M71 244.5h2M159 60.5h2M111 126.5h3M228 185.5h1M29 236.5h2M32 30.5h1M237 217.5h3M228 24.5h2M195 163.5h2M94 242.5h2M111 245.5h2M7 108.5h2M245 124.5h3M122 164.5h2M238 50.5h2M180 86.5h2M3 211.5h2M77 4.5h2M6 8.5h3M91 54.5h1M129 181.5h2M243 28.5h1M143 16.5h2M106 73.5h2M71 40.5h3M50 223.5h2M221 95.5h3M78 199.5h2M157 227.5h2M149 251.5h3M92 13.5h2M149 35.5h2M193 37.5h2M43 55.5h2M22 204.5h2M77 176.5h1M105 247.5h2M101 230.5h3M234 58.5h2M160 198.5h3M59 93.5h2M214 70.5h3M230 27.5h2M99 196.5h3M251 212.5h2M52 126.5h2M105 30.5h3M203 111.5h2M165 145.5h2M235 8.5h1M119 219.5h1M244 39.5h2M52 52.5h2M36 6.5h2M29 125.5h1M5 83.5h2M32 134.5h3M184 28.5h2M6 125.5h1M163 138.5h1M159 167.5h1M124 237.5h2M119 177.5h1M214 251.5h1M211 190.5h2M201 167.5h2M230 238.5h2M169 62.5h1M88 181.5h2M151 255.5h2M127 9.5h2M248 176.5h3M92 13.5h2M46 28.5h2M244 0.5h2M182 114.5h3M211 252.5h2M37 175.5h2M247 15.5h2M251 78.5h1M149 41.5h2M203 241.5h2M198 94.5h2M228 22.5h2M116 31.5h2M17 75.5h1M222 103.5h2M176 210.5h2M205 19.5h2M164 137.5h2M191 28.5h3M206 69.5h3M184 101.5h2M228 90.5h2M140 216.5h2M191 144.5h2M172 141.5h2M152 96.5h2M254 151.5h2M18 97.5h2M234 73.5h2M41 249.5h2M156 85.5h1M148 233.5h3M68 175.5h2M108 11.5h3M227 194.5h1M138 70.5h2M60 144.5h1M102 134.5h3M45 56.5h3M233 151.5h2M137 47.5h2M224 92.5h3M14 66.5h2M229 45.5h2M254 9.5h1M105 233.5h2M68 255.5h1M153 160.5h3M213 146.5h2M136 82.5h2M31 151.5h2M160 27.5h1M226 115.5h2M38 95.5h2M20 219.5h2M154 251.5h3M81 212.5h3M243 4.5h1M58 197.5h2M36 116.5h2M183 54.5h2M15 242.5h2M191 5.5h3M21 2.5h3M128 50.5h2M169 182.5h2M245 236.5h2M207 108.5h1M148 68.5h2M118 32.5h2M105 184.5h2M140 134.5h3M128 192.5h2M176 249.5h2M28 85.5h2M207 9.5h2M73 93.5h3M175 232.5h3M19 60.5h1M219 117.5h2M42 145.5h3M96 2.5h1M3 192.5h2M133 216.5h3M91 189.5h3M51 109.5h3M26 82.5h2M46 74.5h2M196 205.5h3M29 89.5h2M146 99.5h1M80 44.5h2M112 117.5h2M175 38.5h3M143 203.5h2M89 234.5h1M4 6.5h2M185 132.5h2M214 190.5h2M138 120.5h3M74 76.5h2M255 68.5h3M243 49.5h2M249 228.5h1M162 149.5h2M227 185.5h3M42 53.5h2M64 67.5h3M226 157.5h2M149 118.5h1M122 139.5h2M137 211.5h2M148 56.5h2M74 28.5h2M240 92.5h2M197 226.5h2M235 48.5h3M62 129.5h2M7 85.5h2M173 30.5h1M68 128.5h1M150 250.5h2M194 94.5h1M122 164.5h1M78 144.5h2M49 34.5h1M16 103.5h1M25 187.5h2M184 212.5h2M136 20.5h1M110 49.5h1M180 161.5h3M190 211.5h2M130 184.5h2M154 3.5h2M161 11.5h2M79 48.5h1M76 167.5h3M201 228.5h3M243 25.5h3M222 66.5h2M45 57.5h2M74 225.5h1M108 104.5h3M138 27.5h2M198 138.5h2M161 248.5h3M170 250.5h2M116 213.5h2M159 168.5h2M60 94.5h2M15 163.5h2M240 191.5h2M125 202.5h1M27 72.5h2M171 76.5h2M103 1.5h3M252 121.5h2M209 226.5h1M90 233.5h3M218 33.5h2M140 168.5h3M147 218.5h3M181 66.5h3M254 252.5h2M60 106.5h3M170 179.5h3M103 144.5h2M165 3.5h1M245 242.5h1M235 171.5h2M28 153.5h3M192 84.5h3M59 157.5h2M19 103.5h1M158 167.5h2M44 170.5h2M58 7.5h3M91 228.5h3M101 40.5h2M238 240.5h2M169 166.5h2M57 179.5h2M220 222.5h3M249 58.5h3M0 75.5h2M228 100.5h2M27 0.5h3M162 195.5h2M232 217.5h3M17 19.5h3M246 40.5h2M5 240.5h2M77 228.5h2M85 107.5h3M6 147.5h2M4 34.5h1M228 179.5h2M192 94.5h1M239 38.5h2M102 201.5h2M128 228.5h1M46 187.5h3M183 249.5h1M192 80.5h1M145 213.5h2M19 92.5h2M90 80.5h1M120 227.5h3M211 102.5h2M232 91.5h2M126 126.5h2M76 2.5h2M240 17.5h2M46 8.5h2M235 12.5h2M0 36.5h2M34 104.5h2M115 164.5h2M75 254.5h2M11 150.5h2M167 248.5h3M147 24.5h2M64 225.5h2M83 154.5h1M255 74.5h2M228 44.5h3M171 33.5h3M70 102.5h2M251 21.5h2M237 114.5h1M185 246.5h3M73 6.5h2M248 210.5h2M58 213.5h2M88 155.5h1M30 240.5h1M105 102.5h2M54 92.5h2M116 208.5h1M188 91.5h1M52 86.5h1M248 142.5h2M15 50.5h1M13 91.5h2M155 49.5h1M16 220.5h1M155 84.5h2M199 249.5h1M240 243.5h3M200 134.5h2M210 179.5h1M159 43.5h1M11 162.5h2M50 250.5h1M254 173.5h2M205 115.5h3M154 153.5h2M212 205.5h2M109 239.5h2M123 77.5h2M237 248.5h3M142 90.5h1M61 128.5h2M27 122.5h2M251 241.5h2M216 51.5h2M180 215.5h3M144 101.5h1M7 222.5h2M136 147.5h2M105 110.5h2M131 37.5h1M23 2.5h2M255 143.5h2M108 2.5h3M245 232.5h2M66 108.5h1M28 36.5h3M204 45.5h1M188 102.5h2M237 114.5h2M48 237.5h3M41 8.5h1M132 54.5h2M59 6.5h2M97 57.5h1M148 18.5h2M249 118.5h1M161 32.5h2M82 106.5h2M24 9.5h2M136 77.5h3M70 62.5h2M43 136.5h2M125 77.5h3M84 222.5h1M77 29.5h3M71 193.5h3M225 250.5h2M189 60.5h3M189 148.5h1M209 198.5h2M96 243.5h3M92 9.5h2M227 43.5h3M121 252.5h3M33 247.5h1M126 64.5h2M104 72.5h2M125 216.5h3M179 108.5h3M168 8.5h2M243 2.5h1M39 15.5h2M4 63.5h2M113 119.5h2M202 56.5h2M26 165.5h2M114 24.5h2M49 14.5h2M174 27.5h2M33 65.5h1M51 173.5h1M75 240.5h2M239 169.5h3M97 98.5h3M85 198.5h3M91 164.5h2M18 106.5h2M80 191.5h2M43 151.5h2M21 238.5h3M239 221.5h2M206 207.5h3M239 236.5h2M15 191.5h2M200 195.5h2M90 16.5h3M35 232.5h1M243 81.5h3M228 32.5h2M168 251.5h2M234 196.5h2M149 34.5h2M62 188.5h1M69 167.5h2M124 224.5h2M82 87.5h1M139 78.5h2M24 193.5h2M7 172.5h2M165 88.5h1M229 195.5h3M30 70.5h2M20 212.5h2M127 113.5h3M98 26.5h2M88 104.5h2M239 159.5h2M203 193.5h2M89 131.5h2M36 209.5h1M196 203.5h3M96 216.5h2M45 55.5h3M73 137.5h2M157 3.5h2M35 213.5h3M101 249.5h2M192 136.5h2M219 172.5h2M161 122.5h2M29 182.5h2M166 227.5h2M73 16.5h2M239 86.5h2M45 54.5h2M64 113.5h1M235 161.5h2M153 81.5h1M242 178.5h2M144 144.5h2M226 247.5h2M75 192.5h2M28 49.5h2M245 140.5h1M247 222.5h2M32 94.5h2M250 32.5h3M92 2.5h3M131 17.5h1M127 153.5h1" stroke="#c4c4c4" stroke-width="1" opacity="0.85"/><path d="M111.5 119v3M214.5 112v2M125.5 83v2M161.5 108v2M70.5 252v1M232.5 1v2M40.5 43v2M216.5 108v3M216.5 93v2M161.5 37v1M68.5 135v1M79.5 139v2M104.5 135v3M65.5 21v2M20.5 183v2M181.5 208v3M235.5 179v2M146.5 107v2M37.5 233v2M233.5 68v2M162.5 226v3M77.5 118v2M31.5 105v2M199.5 172v2M65.5 13v2M124.5 52v2M61.5 21v2M35.5 174v1M54.5 221v2M78.5 222v2M138.5 247v2M230.5 124v2M208.5 250v3M124.5 156v3M161.5 61v3M27.5 149v2M58.5 33v2M27.5 77v2M219.5 156v3M144.5 232v1M101.5 217v1M117.5 10v2M89.5 240v3M209.5 170v2M208.5 47v2M236.5 60v2M69.5 35v2M193.5 233v2M162.5 242v2M7.5 73v2M51.5 227v2M74.5 125v3M130.5 235v2M180.5 112v2M38.5 72v2M63.5 232v2M69.5 198v2M214.5 79v2M232.5 46v2M119.5 168v2M141.5 74v2M215.5 58v1M205.5 218v1M160.5 130v2M49.5 190v2M168.5 62v2M188.5 58v2M205.5 35v2M189.5 159v2M220.5 89v2M9.5 235v1M166.5 87v3M205.5 40v2M99.5 178v2M78.5 38v2M237.5 229v3M236.5 21v2M31.5 230v1M72.5 179v2M192.5 168v2M51.5 19v2M84.5 224v1M240.5 99v2M128.5 26v2M14.5 163v1M71.5 240v2M255.5 8v3M21.5 161v2M95.5 254v2M180.5 222v2M29.5 38v2M81.5 15v2M78.5 230v2M231.5 88v2M184.5 188v2M44.5 33v2M65.5 93v2M86.5 78v2M135.5 107v3M254.5 148v2M73.5 160v2M49.5 25v2M214.5 127v2M144.5 253v3M147.5 37v2M167.5 163v2M153.5 243v1M211.5 104v2M241.5 31v2M245.5 178v3M40.5 177v2M139.5 70v1M57.5 169v2M95.5 7v2M98.5 89v3M196.5 120v2M154.5 5v2M68.5 244v2M191.5 212v3M59.5 105v3M146.5 209v2M215.5 191v2M193.5 192v1M65.5 114v1M57.5 16v2M119.5 163v3M164.5 121v2M89.5 218v3M73.5 237v1M97.5 26v2M20.5 37v2M183.5 157v2M104.5 189v2M125.5 255v3M131.5 250v2M30.5 17v1M146.5 8v3M222.5 169v3M21.5 117v2M243.5 138v1M203.5 167v1M230.5 251v2M44.5 95v2M43.5 124v3M39.5 184v2M202.5 170v3M225.5 171v2M69.5 153v2M245.5 160v2M155.5 123v2M113.5 228v2M58.5 11v2M218.5 236v2M109.5 105v2M147.5 86v2M187.5 21v2M134.5 178v1M121.5 107v3M48.5 69v2M47.5 206v3M47.5 234v2M67.5 154v2M84.5 26v2M227.5 4v1M84.5 225v2M77.5 210v3M44.5 51v2M141.5 43v2M96.5 200v2M215.5 187v3M20.5 30v2M33.5 158v2M80.5 130v1M76.5 91v1M26.5 91v2M205.5 35v2M102.5 149v3M143.5 47v1M106.5 231v2M46.5 80v2M89.5 15v2M62.5 6v1M66.5 101v2M227.5 65v1M228.5 76v1M143.5 29v2M28.5 112v3M183.5 14v2M66.5 174v2M72.5 56v3M69.5 80v2M162.5 89v3M150.5 65v2M200.5 16v2M34.5 179v2M24.5 197v2M245.5 115v2M38.5 47v2M97.5 209v3M137.5 31v2M43.5 176v3M34.5 44v2M141.5 234v1M51.5 54v3M121.5 25v2M226.5 108v2M83.5 109v2M4.5 242v2M4.5 114v2M111.5 238v2M203.5 52v1M29.5 206v2M92.5 150v1M157.5 215v2M36.5 241v2M70.5 102v2M86.5 81v2M66.5 222v2M196.5 2v1M19.5 192v2M46.5 38v1M89.5 20v2M218.5 59v1M30.5 81v1M6.5 114v2M48.5 221v2M197.5 76v3M5.5 80v3M206.5 120v1M0.5 46v3M114.5 232v2M113.5 1v2M61.5 201v2M63.5 230v2M221.5 247v3M88.5 65v1M164.5 196v2M127.5 140v2M231.5 68v2M148.5 176v2M91.5 165v1M231.5 52v3M114.5 199v2M147.5 24v2M100.5 99v2M130.5 2v2M20.5 78v2M162.5 112v2M124.5 20v2M3.5 33v2M217.5 53v2M44.5 144v2M43.5 156v2M176.5 108v2M99.5 58v2M156.5 78v3M71.5 100v2M38.5 9v3M241.5 76v2M186.5 5v2M193.5 187v3M60.5 117v2M0.5 220v3M185.5 54v2M203.5 104v2M157.5 176v2M60.5 117v2M32.5 134v2M118.5 86v1M131.5 128v2M124.5 173v2M252.5 3v3M190.5 161v2M140.5 251v2M92.5 67v3M249.5 153v2M101.5 89v2M74.5 85v2M182.5 166v2M139.5 227v2M90.5 233v3M158.5 177v2M5.5 0v3M176.5 146v2M195.5 6v1M124.5 4v1M165.5 239v2M198.5 97v3M198.5 250v3M106.5 251v1M97.5 98v3M91.5 212v1M205.5 172v2M123.5 109v2M153.5 47v3M48.5 153v1M213.5 61v2M202.5 100v3M164.5 176v3M86.5 179v3M247.5 72v1M197.5 118v2M141.5 31v2M70.5 44v2M69.5 220v2M80.5 162v1M224.5 250v2M218.5 207v1M160.5 201v3M19.5 55v2M25.5 97v2M146.5 236v2M57.5 92v3M185.5 43v3M81.5 193v3M254.5 255v3M178.5 18v2M91.5 82v2M153.5 165v2M107.5 29v1M44.5 247v3M9.5 106v3M44.5 254v2M67.5 105v1M59.5 2v2M159.5 11v3M54.5 166v3M236.5 205v3M120.5 88v1M55.5 194v2M46.5 111v2M155.5 222v2M144.5 15v2M212.5 233v3M115.5 95v2M121.5 137v2M45.5 125v2M169.5 215v2M148.5 85v1M155.5 133v1M140.5 131v1M120.5 248v2M175.5 43v2M21.5 49v3M130.5 200v2M220.5 111v3M200.5 1v3M244.5 223v2M35.5 115v1M246.5 62v3M196.5 97v2M157.5 255v3M72.5 250v1M157.5 49v2M32.5 54v1M112.5 32v2M205.5 166v1M70.5 164v2M20.5 68v1M3.5 91v1M60.5 48v3M80.5 87v3M44.5 210v3M207.5 94v2M16.5 151v2M106.5 41v3M58.5 244v3M248.5 62v2M149.5 231v3M67.5 242v2M118.5 171v2M227.5 234v2M169.5 151v2M75.5 226v2M217.5 212v2M73.5 106v2M153.5 241v1M213.5 91v2M14.5 61v2M243.5 61v2M39.5 99v2M85.5 165v2M71.5 226v3M154.5 5v1M123.5 34v1M2.5 50v2M145.5 233v3M227.5 115v3M219.5 96v1M53.5 202v2M61.5 73v2M255.5 142v3M204.5 182v2M133.5 175v3M65.5 187v2M174.5 194v1M223.5 103v2M92.5 9v3M32.5 208v2M62.5 160v2M126.5 142v2M185.5 62v3M198.5 4v2M82.5 224v2M208.5 17v2M167.5 232v1M66.5 210v2M68.5 133v2M193.5 114v1M86.5 25v2M114.5 104v2M120.5 230v2M234.5 43v1M203.5 108v2M120.5 241v2M202.5 189v2M91.5 133v2M161.5 251v2M59.5 253v1M92.5 86v3M39.5 126v2M13.5 145v1M22.5 231v2M137.5 216v1M42.5 148v2M244.5 153v2M153.5 127v3M152.5 160v3M230.5 135v2M207.5 249v2M13.5 107v2M124.5 103v2M221.5 212v2M242.5 59v2M173.5 239v2M199.5 213v2M249.5 132v2M25.5 224v2M219.5 211v2M75.5 206v2M226.5 176v2M132.5 123v2M63.5 24v1M2.5 232v2M206.5 202v2M60.5 108v2M73.5 72v3M172.5 193v2M67.5 70v3M23.5 226v2M12.5 158v3M43.5 98v3M45.5 78v2M9.5 137v3M162.5 175v2M4.5 113v1M183.5 98v1M99.5 89v1M65.5 132v3M140.5 98v1M129.5 232v1M62.5 238v2M12.5 115v2M37.5 224v1M43.5 31v1M26.5 150v2M210.5 119v3M232.5 196v2M65.5 159v3M183.5 159v3M21.5 253v2M169.5 192v2M58.5 72v2M51.5 10v2M190.5 87v3M219.5 125v1M143.5 64v3M107.5 41v2M253.5 242v2M154.5 140v2M242.5 119v3M206.5 153v2M16.5 71v2M214.5 244v1M152.5 200v3M212.5 127v2M236.5 195v2M17.5 110v2M52.5 199v2M167.5 165v3M154.5 255v1M87.5 128v1M6.5 119v1M158.5 121v2M42.5 153v3M191.5 251v2M83.5 99v2M178.5 250v2M217.5 126v2M75.5 130v2M82.5 6v1M220.5 87v2M98.5 132v2M205.5 71v1M143.5 127v2M164.5 8v2M41.5 178v2M243.5 63v2M251.5 46v2M33.5 175v2M96.5 59v3M198.5 216v2M17.5 163v2M140.5 244v2M115.5 26v2M49.5 67v2M27.5 155v2M100.5 4v2M26.5 60v3M250.5 154v3M192.5 45v2M186.5 87v2" stroke="#c4c4c4" stroke-width="1" opacity="0.85"/><path d="M57 12.5h2M3 81.5h2M185 98.5h1M112 166.5h1M58 136.5h2M82 0.5h3M61 126.5h2M121 142.5h2M55 127.5h2M7 47.5h2M109 205.5h1M31 160.5h1M80 29.5h3M51 37.5h3M170 66.5h2M122 140.5h2M32 212.5h2M10 194.5h2M112 249.5h2M133 194.5h2M194 142.5h2M9 26.5h2M20 15.5h2M58 83.5h2M251 229.5h1M144 51.5h2M154 7.5h3M52 6.5h3M50 106.5h2M122 88.5h3M230 240.5h2M18 232.5h1M14 122.5h2M174 136.5h1M23 166.5h1M123 254.5h3M238 147.5h3M70 49.5h1M212 89.5h2M10 25.5h2M105 35.5h3M121 165.5h1M154 234.5h1M108 79.5h2M226 212.5h2M28 3.5h2M70 130.5h2M207 213.5h2M75 120.5h1M155 140.5h3M158 236.5h2M43 88.5h1M52 63.5h2M216 56.5h2M10 199.5h2M92 150.5h2M70 187.5h2M62 102.5h2M28 63.5h3M207 152.5h2M123 238.5h1M240 146.5h3M173 187.5h2M20 23.5h1M202 176.5h2M124 25.5h3M31 60.5h2M103 76.5h2M228 28.5h2M1 111.5h3M68 178.5h1M68 198.5h2M213 151.5h2M153 41.5h1M151 126.5h1M166 197.5h1M86 71.5h2M32 85.5h2M253 100.5h2M43 59.5h2M84 124.5h3M32 52.5h3M152 43.5h2M88 85.5h2M15 112.5h2M219 84.5h3M86 165.5h2M64 67.5h2M188 232.5h2M216 67.5h2M196 179.5h2M122 253.5h2M37 8.5h3M212 216.5h2M78 142.5h1M137 60.5h1M100 125.5h2M103 69.5h3M182 202.5h3M43 132.5h1M44 143.5h2M119 81.5h1M181 88.5h2M96 252.5h3M191 202.5h3M45 171.5h2M222 80.5h1M135 144.5h2M150 245.5h2M243 120.5h2M85 108.5h2M242 19.5h2M98 102.5h1M203 63.5h1M83 132.5h1M243 183.5h3M93 171.5h1M127 115.5h2M24 55.5h1M209 151.5h2M106 246.5h2M205 204.5h2M84 38.5h2M149 191.5h1M71 209.5h1M12 195.5h2M113 109.5h2M98 164.5h3M145 35.5h2M55 89.5h3M71 225.5h2M143 108.5h2M246 245.5h2M241 246.5h2M197 67.5h1M214 76.5h3M202 207.5h3M232 206.5h3M14 246.5h1M4 134.5h2M97 255.5h2M135 105.5h2M182 79.5h1M216 244.5h3M241 175.5h2M184 131.5h2M207 36.5h1M85 94.5h1M128 40.5h2M199 158.5h2M251 244.5h2M199 193.5h2M251 96.5h2M11 95.5h1M224 4.5h2M26 111.5h1M79 190.5h1M177 224.5h2M82 35.5h3M234 218.5h1M17 145.5h3M135 187.5h3M5 195.5h1M221 148.5h2M126 124.5h1M191 79.5h1M156 230.5h2M22 130.5h2M234 11.5h1M140 77.5h2M70 83.5h2M69 201.5h2M232 103.5h2M83 63.5h1M228 147.5h2M142 106.5h1M152 169.5h1M148 99.5h1M14 89.5h2M181 33.5h2M154 110.5h3M247 78.5h2M107 164.5h2M163 225.5h1M173 227.5h1M25 54.5h2M81 246.5h2M49 227.5h2M88 243.5h2M64 68.5h1M39 159.5h3M26 149.5h3M253 211.5h2M135 59.5h1M99 172.5h2M218 165.5h2M31 195.5h2M235 148.5h2M122 250.5h2M234 76.5h3M86 189.5h3M138 230.5h2M154 178.5h2M112 237.5h2M22 27.5h2M171 232.5h1M166 117.5h1M99 183.5h2M30 143.5h2M214 87.5h2M242 236.5h2M6 208.5h2M28 186.5h1M216 141.5h1M33 96.5h2M91 147.5h1M156 87.5h2M17 162.5h2M20 71.5h3M112 228.5h2M99 113.5h2M189 197.5h2M209 139.5h2M132 83.5h3M69 182.5h2M111 79.5h3M65 72.5h2M74 142.5h3M147 20.5h1M102 206.5h1M252 238.5h2M192 226.5h2M86 10.5h3M216 215.5h2M38 109.5h2M243 218.5h2M222 30.5h3M32 104.5h2M82 131.5h3M18 103.5h2M10 28.5h1M120 216.5h2M251 191.5h1M94 227.5h2M156 160.5h3M239 67.5h1M225 27.5h2M18 240.5h2M54 165.5h2M206 145.5h2M95 222.5h2M39 23.5h3M184 202.5h2M223 97.5h1M227 248.5h2M240 176.5h2M51 212.5h2M81 89.5h3M54 52.5h3M60 105.5h2M226 255.5h1M3 125.5h2M185 15.5h2M155 160.5h2M56 30.5h2M156 191.5h2M213 246.5h3M23 251.5h1M12 162.5h2M50 86.5h2M30 166.5h2M132 192.5h1M71 143.5h2M139 125.5h2M161 2.5h2M171 128.5h2M154 221.5h1M99 64.5h3M227 95.5h2M27 216.5h2M103 35.5h2M153 214.5h2M117 238.5h3M3 185.5h1M184 22.5h1M91 100.5h1M56 173.5h2M139 195.5h1M38 183.5h1M40 141.5h2M19 102.5h2M133 4.5h2M96 219.5h2M4 255.5h2M35 197.5h2M167 210.5h2M166 209.5h2M122 102.5h1M49 85.5h2M202 219.5h1M142 188.5h1M169 175.5h2M93 226.5h1M90 127.5h2M221 79.5h2M185 14.5h2M154 195.5h3M108 95.5h2M55 85.5h1M141 32.5h2M243 51.5h2M167 196.5h2M195 223.5h2M194 0.5h2M112 255.5h2M76 206.5h2M140 227.5h2M20 65.5h3" stroke="#c85a5a" stroke-width="1" opacity="0.8"/><path d="M193.5 40v3M161.5 205v2M234.5 73v2M185.5 157v2M117.5 112v1M38.5 226v3M199.5 135v2M249.5 79v2M34.5 120v2M126.5 20v3M154.5 4v3M218.5 4v1M170.5 210v2M100.5 186v2M242.5 86v1M101.5 75v1M196.5 253v2M2.5 54v2M237.5 25v3M108.5 181v2M176.5 217v3M138.5 156v2M98.5 110v2M174.5 94v1M136.5 72v1M168.5 210v2M77.5 253v1M169.5 51v2M38.5 240v2M249.5 18v3M92.5 87v2M195.5 183v3M11.5 202v2M187.5 139v2M154.5 209v1M155.5 252v1M227.5 120v2M183.5 31v2M56.5 13v2M55.5 231v3M13.5 136v1M158.5 173v2M43.5 26v2M176.5 220v1M249.5 157v1M113.5 170v2M209.5 173v3M171.5 33v2M115.5 70v2M192.5 78v2M121.5 227v3M229.5 119v3M230.5 75v2M74.5 70v1M22.5 180v3M234.5 18v2M182.5 24v2M136.5 42v2M227.5 179v2M224.5 17v2M146.5 251v2M145.5 40v2M172.5 21v1M255.5 157v2M194.5 75v2M126.5 142v3M109.5 103v3M18.5 203v2M148.5 19v1M235.5 177v2M8.5 123v2M119.5 111v1M113.5 211v2M40.5 230v2M113.5 74v1M247.5 249v1M207.5 235v3M123.5 199v3M208.5 52v1M143.5 201v2M205.5 214v3M5.5 50v2M231.5 163v1M95.5 221v2M180.5 234v3M253.5 57v3M126.5 201v2M212.5 192v2M248.5 175v1M233.5 0v2M47.5 184v2M195.5 68v2M145.5 13v2M104.5 79v3M28.5 158v2M132.5 85v2M59.5 116v3M214.5 114v2M192.5 157v1M48.5 68v2M222.5 66v2M20.5 110v2M127.5 48v2M221.5 202v2M165.5 30v1M113.5 53v2M121.5 177v2M17.5 150v1M214.5 57v2M10.5 172v2M50.5 116v2M137.5 209v3M237.5 60v2M195.5 152v2M29.5 2v2M7.5 164v3M206.5 9v2M78.5 105v1M4.5 70v2M244.5 215v2M210.5 225v1M142.5 25v3M242.5 186v2M173.5 55v2M191.5 228v2M222.5 36v2M19.5 44v1M207.5 221v2M3.5 32v3M200.5 151v2M72.5 82v2M27.5 236v3M219.5 86v1M223.5 141v2M84.5 71v2M74.5 247v2M23.5 20v2M210.5 11v2M82.5 68v3M50.5 217v2M35.5 46v3M178.5 177v2M54.5 37v3M181.5 111v3M203.5 50v2M32.5 242v3M223.5 202v2M111.5 175v2M190.5 237v1M199.5 159v2M54.5 64v2M134.5 187v2M39.5 166v2M40.5 28v2M75.5 147v1M180.5 181v2M15.5 143v2M70.5 103v2M136.5 118v3M183.5 40v2M7.5 138v2M103.5 104v1M26.5 214v2M179.5 163v2M145.5 125v2M239.5 49v2M132.5 186v2M178.5 65v3M206.5 65v2M184.5 213v2M249.5 223v2M143.5 238v3M64.5 39v2M154.5 243v3M199.5 242v2M221.5 139v2M17.5 12v3M111.5 62v1M135.5 91v2M132.5 52v1M0.5 19v2M170.5 155v2M97.5 71v1M8.5 18v2M21.5 207v1M23.5 124v2M171.5 32v1M76.5 242v2M248.5 27v2M50.5 231v2M20.5 187v2M10.5 149v2M85.5 82v3M78.5 82v2M28.5 184v2M157.5 228v3M227.5 212v2M182.5 24v2M154.5 138v2M67.5 8v2M40.5 217v1M220.5 21v2M111.5 98v2M243.5 187v3M238.5 56v3M128.5 250v2M180.5 145v2M48.5 172v2M76.5 98v1M203.5 71v2M140.5 225v2M157.5 10v3M154.5 46v2M117.5 45v2M76.5 45v2M92.5 209v2M72.5 133v1M134.5 135v3M248.5 234v2M75.5 63v2M204.5 130v2M221.5 158v3M93.5 201v1M95.5 108v2M242.5 216v1M26.5 170v1M229.5 223v1M247.5 66v2M220.5 58v3M35.5 43v2M43.5 18v3M64.5 145v2M174.5 81v1M119.5 179v2M98.5 184v2M210.5 41v1M243.5 109v2M65.5 248v2M156.5 145v2M1.5 62v3M229.5 76v2M199.5 50v2M58.5 137v1M237.5 148v2M246.5 139v3M82.5 35v2M250.5 201v3M192.5 183v2M252.5 107v1M100.5 84v2M98.5 55v1M4.5 74v1M112.5 134v2M222.5 33v1M150.5 76v2M120.5 202v2M76.5 203v2M197.5 96v2M231.5 155v1M105.5 66v2M103.5 234v2M46.5 147v2M22.5 122v2M22.5 236v1M203.5 19v1M63.5 200v2M199.5 108v2M198.5 68v2M162.5 246v1M192.5 104v1M227.5 168v2M103.5 139v2M192.5 246v1M100.5 79v2M191.5 196v2M248.5 51v1M3.5 21v1M243.5 211v2M123.5 124v2M44.5 57v1M192.5 30v2M62.5 250v3M63.5 106v1" stroke="#c85a5a" stroke-width="1" opacity="0.8"/></pattern>
<filter id="city" x="0" y="0" width="1328" height="843" filterUnits="userSpaceOnUse" color-interpolation-filters="sRGB">
 <feGaussianBlur in="SourceAlpha" stdDeviation="5" result="blur"/>
 <feTurbulence type="fractalNoise" baseFrequency="0.07" numOctaves="3" seed="5" result="n1"/>
 <feTurbulence type="fractalNoise" baseFrequency="0.35" numOctaves="1" seed="8" result="n2"/>
 <feColorMatrix in="n1" type="matrix" values="0 0 0 0 0  0 0 0 0 0  0 0 0 0 0  1 0 0 0 0" result="a1"/>
 <feColorMatrix in="n2" type="matrix" values="0 0 0 0 0  0 0 0 0 0  0 0 0 0 0  1 0 0 0 0" result="a2"/>
 <feComposite in="a1" in2="a2" operator="arithmetic" k1="0" k2="1.0" k3="0.45" k4="-0.225" result="e"/>
 <feComposite in="blur" in2="e" operator="arithmetic" k1="0" k2="2.8" k3="5" k4="-3.775" result="d"/>
 <feComponentTransfer in="d" result="mask"><feFuncA type="discrete" tableValues="0 1"/></feComponentTransfer>
 <feTurbulence type="fractalNoise" baseFrequency="0.2" numOctaves="2" seed="11" result="cn"/>
 <feTurbulence type="fractalNoise" baseFrequency="0.09" numOctaves="2" seed="23" result="pn"/>
 <feComponentTransfer in="cn" result="cl"><feFuncG type="linear" slope="4" intercept="-1.55"/></feComponentTransfer>
 <feComponentTransfer in="pn" result="pl"><feFuncB type="linear" slope="9" intercept="-5.9"/></feComponentTransfer>
 <feColorMatrix in="cl" type="matrix" values="0 0 0 0 0  0 1 0 0 0  0 0 0 0 0  0 0 0 0 1" result="clg"/>
 <feColorMatrix in="pl" type="matrix" values="0 0 0 0 0  0 0 0 0 0  0 0 1 0 0  0 0 0 0 1" result="plb"/>
 <feComposite in="clg" in2="plb" operator="arithmetic" k1="0" k2="1" k3="1" k4="0" result="lp"/>
 <feColorMatrix in="lp" type="matrix" values="0 -0.03 -0.25 0 0.93  0 0.42 -0.13 0 0.38  0 0.42 0.50 0 0.40  0 0 0 0 1" result="col"/>
 <feComposite in="col" in2="mask" operator="in"/>
</filter>
<filter id="purp" x="0" y="0" width="1328" height="843" filterUnits="userSpaceOnUse" color-interpolation-filters="sRGB">
 <feGaussianBlur in="SourceAlpha" stdDeviation="4" result="pb"/>
 <feTurbulence type="fractalNoise" baseFrequency="0.16" numOctaves="2" seed="31" result="pn"/>
 <feColorMatrix in="pn" type="matrix" values="0 0 0 0 0  0 0 0 0 0  0 0 0 0 0  1 0 0 0 0" result="pa"/>
 <feComposite in="pb" in2="pa" operator="arithmetic" k1="0" k2="2.0" k3="5" k4="-3.85" result="pd"/>
 <feComponentTransfer in="pd" result="pm"><feFuncA type="discrete" tableValues="0 1"/></feComponentTransfer>
 <feFlood flood-color="#b24ae6"/>
 <feComposite in2="pm" operator="in"/>
</filter>
<filter id="rough" x="0" y="0" width="1328" height="843" filterUnits="userSpaceOnUse">
 <feTurbulence type="fractalNoise" baseFrequency="0.15" numOctaves="2" seed="3" result="rn"/>
 <feDisplacementMap in="SourceGraphic" in2="rn" scale="9" xChannelSelector="R" yChannelSelector="G"/>
</filter>
</defs>
<rect width="1328" height="843" fill="#000"/>
<rect width="1328" height="843" fill="url(#spk)"/>
<g stroke="#e47878" stroke-width="1" stroke-opacity="0.6" stroke-dasharray="3 2"><line x1="0" y1="674" x2="344" y2="532"/><line x1="95" y1="686" x2="375" y2="551"/><line x1="348" y1="812" x2="395" y2="638"/><line x1="158" y1="131" x2="407" y2="357"/><line x1="600" y1="510" x2="797" y2="692"/><line x1="860" y1="692" x2="1168" y2="699"/><line x1="545" y1="613" x2="442" y2="843"/><line x1="665" y1="307" x2="787" y2="157"/><line x1="7" y1="357" x2="317" y2="487"/><line x1="1027" y1="143" x2="1201" y2="163"/></g>
<g filter="url(#city)"><line x1="434" y1="364" x2="325" y2="295" stroke="#000" stroke-width="10" stroke-opacity="0.62" stroke-linecap="round"/><line x1="391" y1="477" x2="322" y2="475" stroke="#000" stroke-width="16" stroke-opacity="0.85" stroke-linecap="round"/><line x1="567" y1="557" x2="569" y2="637" stroke="#000" stroke-width="16" stroke-opacity="0.85" stroke-linecap="round"/><line x1="587" y1="337" x2="665" y2="302" stroke="#000" stroke-width="9" stroke-opacity="0.85" stroke-linecap="round"/><line x1="537" y1="267" x2="534" y2="217" stroke="#000" stroke-width="12" stroke-opacity="0.85" stroke-linecap="round"/><line x1="597" y1="397" x2="642" y2="409" stroke="#000" stroke-width="8" stroke-opacity="0.75" stroke-linecap="round"/><line x1="572" y1="497" x2="637" y2="562" stroke="#000" stroke-width="7" stroke-opacity="0.7" stroke-linecap="round"/><line x1="407" y1="557" x2="389" y2="612" stroke="#000" stroke-width="7" stroke-opacity="0.65" stroke-linecap="round"/><line x1="487" y1="277" x2="452" y2="237" stroke="#000" stroke-width="7" stroke-opacity="0.6" stroke-linecap="round"/><polygon points="467,302 507,292 557,287 587,302 612,337 610,372 627,407 622,447 602,477 592,517 582,557 572,587 552,603 522,600 500,589 492,562 487,537 474,542 467,567 452,577 422,569 390,542 372,509 327,492 322,474 362,465 374,437 382,407 405,357 427,327" fill="#000" fill-opacity="0.85"/><polygon points="534,217 552,257 577,292 557,312 477,317 472,287 517,252" fill="#000" fill-opacity="0.6"/><polygon points="1332,567 1307,587 1282,597 1262,617 1267,647 1262,677 1237,687 1197,687 1172,702 1177,727 1207,747 1227,762 1217,787 1177,787 1152,802 1147,843 1332,843" fill="#000" fill-opacity="0.35"/><ellipse cx="509" cy="445" rx="68" ry="105" fill="#000" fill-opacity="0.6"/><ellipse cx="509" cy="445" rx="71" ry="108" fill="#000" fill-opacity="1"/><ellipse cx="525" cy="367" rx="50" ry="38" fill="#000" fill-opacity="0.6"/><ellipse cx="525" cy="367" rx="53" ry="41" fill="#000" fill-opacity="1"/><ellipse cx="437" cy="509" rx="30" ry="25" fill="#000" fill-opacity="0.6"/><ellipse cx="437" cy="509" rx="33" ry="28" fill="#000" fill-opacity="1"/><ellipse cx="533" cy="532" rx="35" ry="45" fill="#000" fill-opacity="0.6"/><ellipse cx="533" cy="532" rx="38" ry="48" fill="#000" fill-opacity="1"/><ellipse cx="560" cy="625" rx="25" ry="22" fill="#000" fill-opacity="0.6"/><ellipse cx="560" cy="625" rx="21" ry="19" fill="#000" fill-opacity="1"/><ellipse cx="113" cy="89" rx="44" ry="54" fill="#000" fill-opacity="0.6"/><ellipse cx="113" cy="89" rx="29" ry="35" fill="#000" fill-opacity="1"/><ellipse cx="456" cy="22" rx="35" ry="40" fill="#000" fill-opacity="0.6"/><ellipse cx="456" cy="22" rx="25" ry="28" fill="#000" fill-opacity="1"/><ellipse cx="287" cy="154" rx="24" ry="15" fill="#000" fill-opacity="0.6"/><ellipse cx="287" cy="154" rx="19" ry="13" fill="#000" fill-opacity="1"/><ellipse cx="325" cy="297" rx="15" ry="21" fill="#000" fill-opacity="0.6"/><ellipse cx="325" cy="297" rx="13" ry="17" fill="#000" fill-opacity="1"/><ellipse cx="125" cy="322" rx="18" ry="16" fill="#000" fill-opacity="0.6"/><ellipse cx="125" cy="322" rx="15" ry="14" fill="#000" fill-opacity="1"/><ellipse cx="513" cy="128" rx="12" ry="14" fill="#000" fill-opacity="0.6"/><ellipse cx="513" cy="128" rx="11" ry="12" fill="#000" fill-opacity="1"/><ellipse cx="612" cy="124" rx="15" ry="15" fill="#000" fill-opacity="0.6"/><ellipse cx="612" cy="124" rx="13" ry="13" fill="#000" fill-opacity="1"/><ellipse cx="819" cy="151" rx="45" ry="39" fill="#000" fill-opacity="0.6"/><ellipse cx="819" cy="151" rx="33" ry="29" fill="#000" fill-opacity="1"/><ellipse cx="697" cy="227" rx="40" ry="46" fill="#000" fill-opacity="0.6"/><ellipse cx="697" cy="227" rx="29" ry="33" fill="#000" fill-opacity="1"/><ellipse cx="1201" cy="163" rx="17" ry="24" fill="#000" fill-opacity="0.6"/><ellipse cx="1201" cy="163" rx="15" ry="20" fill="#000" fill-opacity="1"/><ellipse cx="1027" cy="144" rx="18" ry="18" fill="#000" fill-opacity="0.6"/><ellipse cx="1027" cy="144" rx="15" ry="15" fill="#000" fill-opacity="1"/><ellipse cx="1101" cy="115" rx="14" ry="12" fill="#000" fill-opacity="0.6"/><ellipse cx="1101" cy="115" rx="12" ry="11" fill="#000" fill-opacity="1"/><ellipse cx="1255" cy="81" rx="10" ry="10" fill="#000" fill-opacity="0.6"/><ellipse cx="1255" cy="81" rx="10" ry="10" fill="#000" fill-opacity="1"/><ellipse cx="688" cy="122" rx="13" ry="17" fill="#000" fill-opacity="0.6"/><ellipse cx="688" cy="122" rx="12" ry="15" fill="#000" fill-opacity="1"/><ellipse cx="904" cy="29" rx="9" ry="9" fill="#000" fill-opacity="0.6"/><ellipse cx="904" cy="29" rx="9" ry="9" fill="#000" fill-opacity="1"/><ellipse cx="896" cy="72" rx="7" ry="7" fill="#000" fill-opacity="0.6"/><ellipse cx="896" cy="72" rx="8" ry="8" fill="#000" fill-opacity="1"/><ellipse cx="1219" cy="388" rx="14" ry="18" fill="#000" fill-opacity="0.6"/><ellipse cx="1219" cy="388" rx="13" ry="16" fill="#000" fill-opacity="1"/><ellipse cx="1316" cy="319" rx="13" ry="15" fill="#000" fill-opacity="0.6"/><ellipse cx="1316" cy="319" rx="12" ry="14" fill="#000" fill-opacity="1"/><ellipse cx="692" cy="24" rx="10" ry="10" fill="#000" fill-opacity="0.6"/><ellipse cx="692" cy="24" rx="10" ry="10" fill="#000" fill-opacity="1"/><ellipse cx="992" cy="71" rx="7" ry="7" fill="#000" fill-opacity="0.6"/><ellipse cx="992" cy="71" rx="8" ry="8" fill="#000" fill-opacity="1"/><ellipse cx="170" cy="569" rx="20" ry="16" fill="#000" fill-opacity="0.6"/><ellipse cx="170" cy="569" rx="16" ry="14" fill="#000" fill-opacity="1"/><ellipse cx="47" cy="656" rx="18" ry="15" fill="#000" fill-opacity="0.6"/><ellipse cx="47" cy="656" rx="15" ry="13" fill="#000" fill-opacity="1"/><ellipse cx="388" cy="690" rx="16" ry="15" fill="#000" fill-opacity="0.6"/><ellipse cx="388" cy="690" rx="14" ry="13" fill="#000" fill-opacity="1"/><ellipse cx="655" cy="786" rx="17" ry="28" fill="#000" fill-opacity="0.6"/><ellipse cx="655" cy="786" rx="15" ry="23" fill="#000" fill-opacity="1"/><ellipse cx="616" cy="711" rx="11" ry="14" fill="#000" fill-opacity="0.6"/><ellipse cx="616" cy="711" rx="11" ry="13" fill="#000" fill-opacity="1"/><ellipse cx="316" cy="822" rx="21" ry="14" fill="#000" fill-opacity="0.6"/><ellipse cx="316" cy="822" rx="17" ry="12" fill="#000" fill-opacity="1"/><ellipse cx="229" cy="786" rx="10" ry="8" fill="#000" fill-opacity="0.6"/><ellipse cx="229" cy="786" rx="10" ry="9" fill="#000" fill-opacity="1"/><ellipse cx="233" cy="510" rx="8" ry="8" fill="#000" fill-opacity="0.6"/><ellipse cx="233" cy="510" rx="9" ry="9" fill="#000" fill-opacity="1"/><ellipse cx="201" cy="646" rx="9" ry="8" fill="#000" fill-opacity="0.6"/><ellipse cx="201" cy="646" rx="10" ry="9" fill="#000" fill-opacity="1"/><ellipse cx="67" cy="812" rx="8" ry="8" fill="#000" fill-opacity="0.6"/><ellipse cx="67" cy="812" rx="9" ry="9" fill="#000" fill-opacity="1"/><ellipse cx="675" cy="422" rx="24" ry="26" fill="#000" fill-opacity="0.6"/><ellipse cx="675" cy="422" rx="19" ry="20" fill="#000" fill-opacity="1"/><ellipse cx="695" cy="589" rx="18" ry="28" fill="#000" fill-opacity="0.6"/><ellipse cx="695" cy="589" rx="16" ry="23" fill="#000" fill-opacity="1"/><ellipse cx="841" cy="692" rx="22" ry="20" fill="#000" fill-opacity="0.6"/><ellipse cx="841" cy="692" rx="18" ry="16" fill="#000" fill-opacity="1"/><ellipse cx="979" cy="700" rx="14" ry="14" fill="#000" fill-opacity="0.6"/><ellipse cx="979" cy="700" rx="12" ry="12" fill="#000" fill-opacity="1"/><ellipse cx="1279" cy="123" rx="6" ry="6" fill="#000" fill-opacity="0.6"/><ellipse cx="1279" cy="123" rx="8" ry="8" fill="#000" fill-opacity="1"/><ellipse cx="1318" cy="147" rx="8" ry="13" fill="#000" fill-opacity="0.6"/><ellipse cx="1318" cy="147" rx="9" ry="13" fill="#000" fill-opacity="1"/><ellipse cx="1307" cy="697" rx="36" ry="188" fill="#000" fill-opacity="0.6"/><ellipse cx="1307" cy="697" rx="27" ry="128" fill="#000" fill-opacity="1"/><ellipse cx="1322" cy="545" rx="10" ry="13" fill="#000" fill-opacity="0.6"/><ellipse cx="1322" cy="545" rx="10" ry="12" fill="#000" fill-opacity="1"/><ellipse cx="1237" cy="812" rx="33" ry="27" fill="#000" fill-opacity="0.6"/><ellipse cx="1237" cy="812" rx="25" ry="21" fill="#000" fill-opacity="1"/><ellipse cx="1169" cy="822" rx="16" ry="23" fill="#000" fill-opacity="0.6"/><ellipse cx="1169" cy="822" rx="15" ry="21" fill="#000" fill-opacity="1"/><ellipse cx="1207" cy="712" rx="26" ry="16" fill="#000" fill-opacity="0.6"/><ellipse cx="1207" cy="712" rx="23" ry="15" fill="#000" fill-opacity="1"/></g>
<g filter="url(#purp)" fill="#000"><ellipse cx="492" cy="462" rx="14" ry="22"/><ellipse cx="432" cy="502" rx="14" ry="20"/><ellipse cx="469" cy="431" rx="6" ry="10"/><ellipse cx="537" cy="359" rx="18" ry="16"/><ellipse cx="539" cy="542" rx="10" ry="14"/><ellipse cx="389" cy="339" rx="8" ry="6"/><ellipse cx="132" cy="89" rx="9" ry="8"/><ellipse cx="467" cy="29" rx="8" ry="8"/><ellipse cx="827" cy="147" rx="8" ry="8"/><ellipse cx="702" cy="237" rx="7" ry="8"/><ellipse cx="1307" cy="777" rx="10" ry="30"/><ellipse cx="1237" cy="827" rx="10" ry="8"/><ellipse cx="1312" cy="577" rx="6" ry="12"/></g>
<g fill="none" stroke="#000" stroke-linecap="round" filter="url(#rough)"><polyline points="1172,768 1216,784 1276,800 1332,788" stroke-width="3"/><polyline points="465,587 472,562 480,527 490,497 502,465" stroke-width="7"/><polyline points="502,465 512,417 521,377 533,342 547,312" stroke-width="3"/><polyline points="407,357 437,387 467,422" stroke-width="2.5"/><polyline points="557,402 582,382 607,357" stroke-width="2.5"/><polyline points="455,437 435,477 420,502" stroke-width="3"/><polyline points="477,297 497,327 507,357" stroke-width="2.5"/></g>
</svg><svg class="r" style="left:1593px;top:1020px;" width="20" height="18" viewBox="0 0 20 18"><path d="M1.5 3.5 q0-2 2-2 h4 l1.5 1.5 h7.5 q2 0 2 2 v10 q0 1.5-1.5 1.5 h-3 v-1.5 h-3 v1.5 h-3 v-1.5 h-3 v1.5 h-2 q-1.5 0-1.5-1.5z" fill="#fafafa" stroke="#9a9a9a" stroke-width="1"/><path d="M5 7.5 h10 M5 11 h10" stroke="#888" stroke-width="1.3"/></svg><div class="r" style="left:293px;top:1046px;width:1328px;height:25px;background:#f5f7f7;border-bottom:1px solid #e0e2e5"></div><div class="r" style="left:299px;top:1047px;width:100px;height:22px;background:#fff;border:1px solid #cfd1d4"></div><div class="t" style="left:303.5px;top:1052.41px;font-size:11.33px;line-height:11.33px;color:#333;">1:753,558</div><svg class="r" style="left:386px;top:1055px;" width="9" height="6" viewBox="0 0 9 6"><path d="M1 1 L4.5 4.5 L8 1" fill="none" stroke="#444" stroke-width="1.2"/></svg><div class="r" style="left:404px;top:1050px;width:1px;height:15px;background:#c9cbce"></div><div class="r" style="left:408px;top:1047px;width:21px;height:22px;background:#cce4f7;border:1px solid #8ec3ee"></div><svg class="r" style="left:411px;top:1050px;" width="16" height="16" viewBox="0 0 16 16"><rect x="1" y="1" width="9" height="9" fill="none" stroke="#3d86c6" stroke-width="1.2"/><path d="M1 5.5 h9 M5.5 1 v9" stroke="#3d86c6"/><path d="M12 8 v7 M8.5 11.5 h7" stroke="#3d86c6" stroke-width="1.5"/></svg><svg class="r" style="left:432px;top:1050px;" width="14" height="14" viewBox="0 0 14 14"><path d="M1 1h12v12h-12z M4 1v12 M7 1v12 M10 1v12 M1 4h12 M1 7h12 M1 10h12" fill="none" stroke="#8a8c90" stroke-width="0.8"/></svg><svg class="r" style="left:451px;top:1049px;" width="18" height="18" viewBox="0 0 18 18"><path d="M2 15 L7 9 L11 12 L16 4" fill="none" stroke="#3d86c6" stroke-width="1.3" stroke-dasharray="2 1"/><rect x="1" y="13" width="4" height="4" fill="#6aaa5a"/><rect x="13" y="2" width="4" height="4" fill="#6aaa5a"/><path d="M2 3h6 M2 6h4" stroke="#888"/></svg><svg class="r" style="left:471px;top:1049px;" width="18" height="18" viewBox="0 0 18 18"><path d="M9 1 v16 M1 9 h16" stroke="#888" stroke-width="1.4"/><rect x="6" y="6" width="6" height="6" fill="#6aaa5a"/></svg><svg class="r" style="left:491px;top:1049px;" width="18" height="18" viewBox="0 0 18 18"><path d="M2 15 v-12 l6 12 v-12" fill="none" stroke="#3d86c6" stroke-width="1.5"/><path d="M11 2 l6 7 l-6 7" fill="none" stroke="#3d86c6" stroke-width="1.3" stroke-dasharray="2 1"/></svg><svg class="r" style="left:512px;top:1049px;" width="18" height="18" viewBox="0 0 18 18"><path d="M3 5 h10 v9 h-6" fill="none" stroke="#666" stroke-width="1.5"/><path d="M13 2 l3 3 l-3 3" fill="none" stroke="#3d86c6" stroke-width="1.3"/><circle cx="3" cy="5" r="2" fill="#e25050"/></svg><svg class="r" style="left:536px;top:1055px;" width="8" height="6" viewBox="0 0 8 6"><path d="M1 1 L4 4.5 L7 1" fill="none" stroke="#333" stroke-width="1.3"/></svg><div class="r" style="left:552px;top:1050px;width:1px;height:15px;background:#c9cbce"></div><div class="t" style="left:884.4px;top:1053.66px;font-size:11.39px;line-height:11.39px;color:#444;">976,799.60E 1,904,950.63N m</div><svg class="r" style="left:1051px;top:1056px;" width="9" height="6" viewBox="0 0 9 6"><path d="M1 1 L4.5 4.5 L8 1" fill="none" stroke="#333" stroke-width="1.4"/></svg><div class="r" style="left:1392px;top:1051px;width:1px;height:14px;background:#c9cbce"></div><svg class="r" style="left:1399px;top:1050px;" width="18" height="16" viewBox="0 0 18 16"><rect x="6" y="1" width="11" height="9" fill="#fff" stroke="#9aa" stroke-width="1"/><circle cx="6" cy="10" r="5" fill="none" stroke="#7aaad0" stroke-width="1.3"/><path d="M4 10h4M6 8v4" stroke="#5a8fc0"/></svg><div class="t" style="left:1420.4px;top:1052.98px;font-size:11.48px;line-height:11.48px;color:#8a8c90;">Selected Features: 0</div><div class="r" style="left:1533px;top:1051px;width:1px;height:14px;background:#c9cbce"></div><svg class="r" style="left:1542px;top:1051px;" width="14" height="14" viewBox="0 0 14 14"><rect x="0.5" y="0.5" width="13" height="13" fill="none" stroke="#999"/><path d="M3 3 l4 5 l4-4 M7 8 v5" stroke="#aaa" fill="none"/></svg><div class="r" style="left:1564px;top:1051px;width:1px;height:14px;background:#c9cbce"></div><div class="r" style="left:1572px;top:1052px;width:4px;height:13px;background:#6e6a6a"></div><div class="r" style="left:1579px;top:1052px;width:4px;height:13px;background:#6e6a6a"></div><div class="r" style="left:1593px;top:1051px;width:1px;height:14px;background:#c9cbce"></div><svg class="r" style="left:1600px;top:1052px;" width="16" height="16" viewBox="0 0 16 16"><circle cx="8" cy="8" r="5.5" fill="none" stroke="#4ea0dc" stroke-width="3.5"/></svg><div class="r" style="left:1629px;top:178px;width:284px;height:893px;background:#f5f7f7;border:1px solid #e3e5e8;border-radius:6px 6px 0 0"></div><div class="t" style="left:1635.8px;top:187.49px;font-size:16.08px;line-height:16.08px;color:#2b2b2b;">GeoSWMM - GeoSWMM.gdb</div><svg class="r" style="left:1860px;top:192px;" width="10" height="7" viewBox="0 0 10 7"><path d="M1 1.5 L5 5.5 L9 1.5" fill="none" stroke="#444" stroke-width="1.3"/></svg><svg class="r" style="left:1878px;top:189px;" width="10" height="13" viewBox="0 0 10 13"><path d="M3 1 h5 M4 1 v6 h3 v-6 M2 7.5 h7 M5.5 8 v4" stroke="#444" stroke-width="1.2" fill="none"/></svg><svg class="r" style="left:1896px;top:189px;" width="11" height="11" viewBox="0 0 11 11"><path d="M1 1 L10 10 M10 1 L1 10" stroke="#333" stroke-width="1.3"/></svg><div class="r" style="left:1629px;top:210px;width:284px;height:429px;background:#fff;border:1px solid #a0a0a0;border-right-color:#e3e3e3;border-bottom-color:#e3e3e3"></div><div class="r" style="left:1667px;top:292px;width:83px;height:17px;background:#e6e6e6"></div><div class="r" style="left:1642px;top:218px;width:1px;height:241px;background:repeating-linear-gradient(180deg,#999 0 1px,transparent 1px 2px)"></div><div class="r" style="left:1659px;top:275px;width:1px;height:86px;background:repeating-linear-gradient(180deg,#999 0 1px,transparent 1px 2px)"></div><div class="t" style="left:1652.5px;top:214.67px;font-size:11.85px;line-height:11.85px;color:#111;">Title/Notes</div><div class="r" style="left:1642px;top:221px;width:9px;height:1px;background:repeating-linear-gradient(90deg,#999 0 1px,transparent 1px 2px)"></div><div class="t" style="left:1652.5px;top:230.89px;font-size:11.85px;line-height:11.85px;color:#111;">Options</div><div class="r" style="left:1642px;top:237px;width:9px;height:1px;background:repeating-linear-gradient(90deg,#999 0 1px,transparent 1px 2px)"></div><div class="t" style="left:1652.5px;top:247.11px;font-size:11.85px;line-height:11.85px;color:#111;">Climatology</div><div class="r" style="left:1642px;top:253px;width:9px;height:1px;background:repeating-linear-gradient(90deg,#999 0 1px,transparent 1px 2px)"></div><div class="t" style="left:1652.5px;top:263.33px;font-size:11.85px;line-height:11.85px;color:#111;">Hydrology</div><div class="r" style="left:1642px;top:269px;width:9px;height:1px;background:repeating-linear-gradient(90deg,#999 0 1px,transparent 1px 2px)"></div><svg class="r" style="left:1637px;top:265px;" width="10" height="10" viewBox="0 0 10 10"><rect x="0.5" y="0.5" width="9" height="9" fill="#fff" stroke="#9a9a9a"/><path d="M2.5 5 h5" stroke="#3a5a90"/></svg><div class="t" style="left:1669.5px;top:279.55px;font-size:11.85px;line-height:11.85px;color:#111;">Rain Gages</div><div class="r" style="left:1659px;top:286px;width:9px;height:1px;background:repeating-linear-gradient(90deg,#999 0 1px,transparent 1px 2px)"></div><div class="t" style="left:1669.5px;top:295.77px;font-size:11.85px;line-height:11.85px;color:#111;">Subcatchments</div><div class="r" style="left:1659px;top:302px;width:9px;height:1px;background:repeating-linear-gradient(90deg,#999 0 1px,transparent 1px 2px)"></div><div class="t" style="left:1669.5px;top:311.99px;font-size:11.85px;line-height:11.85px;color:#111;">Aquifers</div><div class="r" style="left:1659px;top:318px;width:9px;height:1px;background:repeating-linear-gradient(90deg,#999 0 1px,transparent 1px 2px)"></div><div class="t" style="left:1669.5px;top:328.21px;font-size:11.85px;line-height:11.85px;color:#111;">Snow Packs</div><div class="r" style="left:1659px;top:334px;width:9px;height:1px;background:repeating-linear-gradient(90deg,#999 0 1px,transparent 1px 2px)"></div><div class="t" style="left:1669.5px;top:344.43px;font-size:11.85px;line-height:11.85px;color:#111;">Unit Hydrographs</div><div class="r" style="left:1659px;top:350px;width:9px;height:1px;background:repeating-linear-gradient(90deg,#999 0 1px,transparent 1px 2px)"></div><div class="t" style="left:1669.5px;top:360.65px;font-size:11.85px;line-height:11.85px;color:#111;">LID Controls</div><div class="r" style="left:1659px;top:367px;width:9px;height:1px;background:repeating-linear-gradient(90deg,#999 0 1px,transparent 1px 2px)"></div><div class="t" style="left:1652.5px;top:376.87px;font-size:11.85px;line-height:11.85px;color:#111;">Hydraulics</div><div class="r" style="left:1642px;top:383px;width:9px;height:1px;background:repeating-linear-gradient(90deg,#999 0 1px,transparent 1px 2px)"></div><svg class="r" style="left:1637px;top:379px;" width="10" height="10" viewBox="0 0 10 10"><rect x="0.5" y="0.5" width="9" height="9" fill="#fff" stroke="#9a9a9a"/><path d="M2.5 5 h5" stroke="#3a5a90"/><path d="M5 2.5 v5" stroke="#3a5a90"/></svg><div class="t" style="left:1652.5px;top:393.09px;font-size:11.85px;line-height:11.85px;color:#111;">Quality</div><div class="r" style="left:1642px;top:399px;width:9px;height:1px;background:repeating-linear-gradient(90deg,#999 0 1px,transparent 1px 2px)"></div><svg class="r" style="left:1637px;top:395px;" width="10" height="10" viewBox="0 0 10 10"><rect x="0.5" y="0.5" width="9" height="9" fill="#fff" stroke="#9a9a9a"/><path d="M2.5 5 h5" stroke="#3a5a90"/><path d="M5 2.5 v5" stroke="#3a5a90"/></svg><div class="t" style="left:1652.5px;top:409.31px;font-size:11.85px;line-height:11.85px;color:#111;">Curves</div><div class="r" style="left:1642px;top:415px;width:9px;height:1px;background:repeating-linear-gradient(90deg,#999 0 1px,transparent 1px 2px)"></div><svg class="r" style="left:1637px;top:411px;" width="10" height="10" viewBox="0 0 10 10"><rect x="0.5" y="0.5" width="9" height="9" fill="#fff" stroke="#9a9a9a"/><path d="M2.5 5 h5" stroke="#3a5a90"/><path d="M5 2.5 v5" stroke="#3a5a90"/></svg><div class="t" style="left:1652.5px;top:425.53px;font-size:11.85px;line-height:11.85px;color:#111;">Time Series</div><div class="r" style="left:1642px;top:432px;width:9px;height:1px;background:repeating-linear-gradient(90deg,#999 0 1px,transparent 1px 2px)"></div><div class="t" style="left:1652.5px;top:441.75px;font-size:11.85px;line-height:11.85px;color:#111;">Time Patterns</div><div class="r" style="left:1642px;top:448px;width:9px;height:1px;background:repeating-linear-gradient(90deg,#999 0 1px,transparent 1px 2px)"></div><div class="t" style="left:1652.5px;top:457.97px;font-size:11.85px;line-height:11.85px;color:#111;">Calibrations</div><div class="r" style="left:1642px;top:464px;width:9px;height:1px;background:repeating-linear-gradient(90deg,#999 0 1px,transparent 1px 2px)"></div><div class="r" style="left:1630px;top:639px;width:282px;height:29px;background:#f0f0f0"></div><svg class="r" style="left:1635px;top:648px;" width="14" height="14" viewBox="0 0 14 14"><path d="M7 1 v12 M1 7 h12" stroke="#a8a8a8" stroke-width="3"/></svg><svg class="r" style="left:1660px;top:648px;" width="15" height="14" viewBox="0 0 15 14"><path d="M2 2 L13 12 M13 2 L2 12" stroke="#c43a3a" stroke-width="3"/></svg><svg class="r" style="left:1685px;top:647px;" width="19" height="17" viewBox="0 0 19 17"><path d="M1 3 h6 l1.5-2 h7 v12 h-14.5z" fill="#e8c840"/><path d="M1 5 h15 v9 h-15z" fill="#f2d860"/><circle cx="14" cy="12" r="4.5" fill="#e03a3a" stroke="#fff" stroke-width="0.8"/><path d="M12 10 l4 4 M16 10 l-4 4" stroke="#fff" stroke-width="1.2"/></svg><div class="r" style="left:1709px;top:645px;width:1px;height:20px;background:#aaa"></div><svg class="r" style="left:1716px;top:646px;" width="19" height="18" viewBox="0 0 19 18"><rect x="1" y="6" width="13" height="11" fill="#dfeaf5" stroke="#6a8fb8"/><path d="M3 9 h9 M3 12 h9" stroke="#9ab"/><path d="M5 5 q4-5 12-3 l-2 5 q-4-2 -10 -2z" fill="#c8a070" stroke="#8a6a40" stroke-width="0.7"/></svg><svg class="r" style="left:1742px;top:645px;" width="19" height="19" viewBox="0 0 19 19"><rect x="1" y="7" width="11" height="11" fill="#dfeaf5" stroke="#6a8fb8"/><rect x="6" y="4" width="11" height="11" fill="#dfeaf5" stroke="#6a8fb8"/><path d="M7 4 q4-4 11-2 v5 q-4-2 -11-3z" fill="#c8a070" stroke="#8a6a40" stroke-width="0.7"/></svg><div class="r" style="left:1629px;top:667px;width:284px;height:393px;background:#fff;border:1px solid #a0a0a0;border-right-color:#e3e3e3;border-bottom-color:#d0d0d0"></div><div class="r" style="left:1631px;top:669px;width:280px;height:15px;background:#0078d7"></div><div class="t" style="left:1633.0px;top:671.58px;font-size:11.13px;line-height:11.13px;color:#fff;">S538</div><div class="t" style="left:1633.0px;top:685.99px;font-size:11.13px;line-height:11.13px;color:#111;">S549</div><div class="t" style="left:1633.0px;top:700.40px;font-size:11.13px;line-height:11.13px;color:#111;">S557</div><div class="t" style="left:1633.0px;top:714.81px;font-size:11.13px;line-height:11.13px;color:#111;">S578</div><div class="t" style="left:1633.0px;top:729.22px;font-size:11.13px;line-height:11.13px;color:#111;">S579</div><div class="t" style="left:1633.0px;top:743.63px;font-size:11.13px;line-height:11.13px;color:#111;">S603</div><div class="t" style="left:1633.0px;top:758.04px;font-size:11.13px;line-height:11.13px;color:#111;">S604</div><div class="t" style="left:1633.0px;top:772.45px;font-size:11.13px;line-height:11.13px;color:#111;">S641</div><div class="t" style="left:1633.0px;top:786.86px;font-size:11.13px;line-height:11.13px;color:#111;">S642</div><div class="t" style="left:1633.0px;top:801.27px;font-size:11.13px;line-height:11.13px;color:#111;">S668</div><div class="r" style="left:1630px;top:1060px;width:282px;height:11px;background:#f0f0f0"></div><div class="r" style="left:1095px;top:477px;width:390px;height:346px;background:#f8f8f8;border:2px solid #9fcdec;box-shadow:0 0 4px rgba(0,0,0,0.35)"></div><div class="t" style="left:1102.7px;top:488.43px;font-size:15.73px;line-height:15.73px;color:#2e8bcc;">Imperviousness Calculation Tool</div><svg class="r" style="left:1431px;top:492px;" width="9" height="6" viewBox="0 0 9 6"><path d="M1 1 L4.5 4.5 L8 1" fill="none" stroke="#333" stroke-width="1.3"/></svg><svg class="r" style="left:1449px;top:490px;" width="10" height="10" viewBox="0 0 10 10"><rect x="0.75" y="0.75" width="8.5" height="8.5" fill="none" stroke="#333" stroke-width="1.3"/><rect x="0.5" y="0.5" width="9" height="2.5" fill="#333"/></svg><svg class="r" style="left:1466px;top:490px;" width="11" height="11" viewBox="0 0 11 11"><path d="M1 1 L10 10 M10 1 L1 10" stroke="#333" stroke-width="1.3"/></svg><svg class="r" style="left:1457px;top:515px;" width="16" height="16" viewBox="0 0 16 16"><circle cx="8" cy="8" r="7.3" fill="#b6def6" stroke="#6cb4e4" stroke-width="1"/><text x="8" y="12.3" text-anchor="middle" font-family="Liberation Sans" font-weight="bold" font-size="11" fill="#1b4f8a">?</text></svg><div class="t" style="left:1110.7px;top:537.53px;font-size:11.78px;line-height:11.78px;color:#333;">Subcatchment Layer</div><div class="r" style="left:1111px;top:552px;width:363px;height:25px;background:#f5f5f5;border:1px solid #dcdcdc"></div><div class="t" style="left:1117.8px;top:557.03px;font-size:11.78px;line-height:11.78px;color:#808080;">Subcatchments</div><div class="t" style="left:1110.7px;top:588.73px;font-size:11.78px;line-height:11.78px;color:#333;">Subcatchment Imperviousness Field</div><div class="r" style="left:1111px;top:602px;width:363px;height:25px;background:#f5f5f5;border:1px solid #dcdcdc"></div><div class="t" style="left:1117.8px;top:607.03px;font-size:11.78px;line-height:11.78px;color:#808080;">PctImprev</div><div class="t" style="left:1110.7px;top:638.83px;font-size:11.78px;line-height:11.78px;color:#333;">Imperviousness Layer Type</div><svg class="r" style="left:1111px;top:659px;" width="14" height="14" viewBox="0 0 14 14"><circle cx="7" cy="7" r="6.3" fill="#fff" stroke="#777" stroke-width="1"/><circle cx="7" cy="7" r="3.7" fill="#3a3a3a"/></svg><div class="r" style="left:1129px;top:657px;width:68px;height:16px;border:1px dotted #555"></div><div class="t" style="left:1131.8px;top:660.46px;font-size:11.27px;line-height:11.27px;color:#333;">Raster Layer</div><svg class="r" style="left:1217px;top:659px;" width="14" height="14" viewBox="0 0 14 14"><circle cx="7" cy="7" r="6.3" fill="#fff" stroke="#777" stroke-width="1"/></svg><div class="t" style="left:1237.8px;top:660.32px;font-size:11.44px;line-height:11.44px;color:#333;">Feature Layer</div><div class="t" style="left:1110.7px;top:685.73px;font-size:11.78px;line-height:11.78px;color:#333;">Imperviousness Layer</div><div class="r" style="left:1111px;top:699px;width:328px;height:25px;background:#fff;border:1px solid #b5b5b5"></div><svg class="r" style="left:1426px;top:708px;" width="8" height="6" viewBox="0 0 8 6"><path d="M1 1 L4 4 L7 1" fill="none" stroke="#333" stroke-width="1.3"/></svg><svg class="r" style="left:1453px;top:705px;" width="18" height="15" viewBox="0 0 18 15"><path d="M1 2 h6 l2 2 h8 v10 h-16z" fill="#3d86c6"/><path d="M1 5 h16 v9 h-16z" fill="#4a94d4"/></svg><div class="r" style="left:1392px;top:787px;width:81px;height:24px;background:#fff;border:1px solid #adadad;border-radius:2px"></div><div class="t" style="left:1407.5px;top:794.15px;font-size:11.87px;line-height:11.87px;color:#9a9a9a;">Calculate</div>
</body></html>
